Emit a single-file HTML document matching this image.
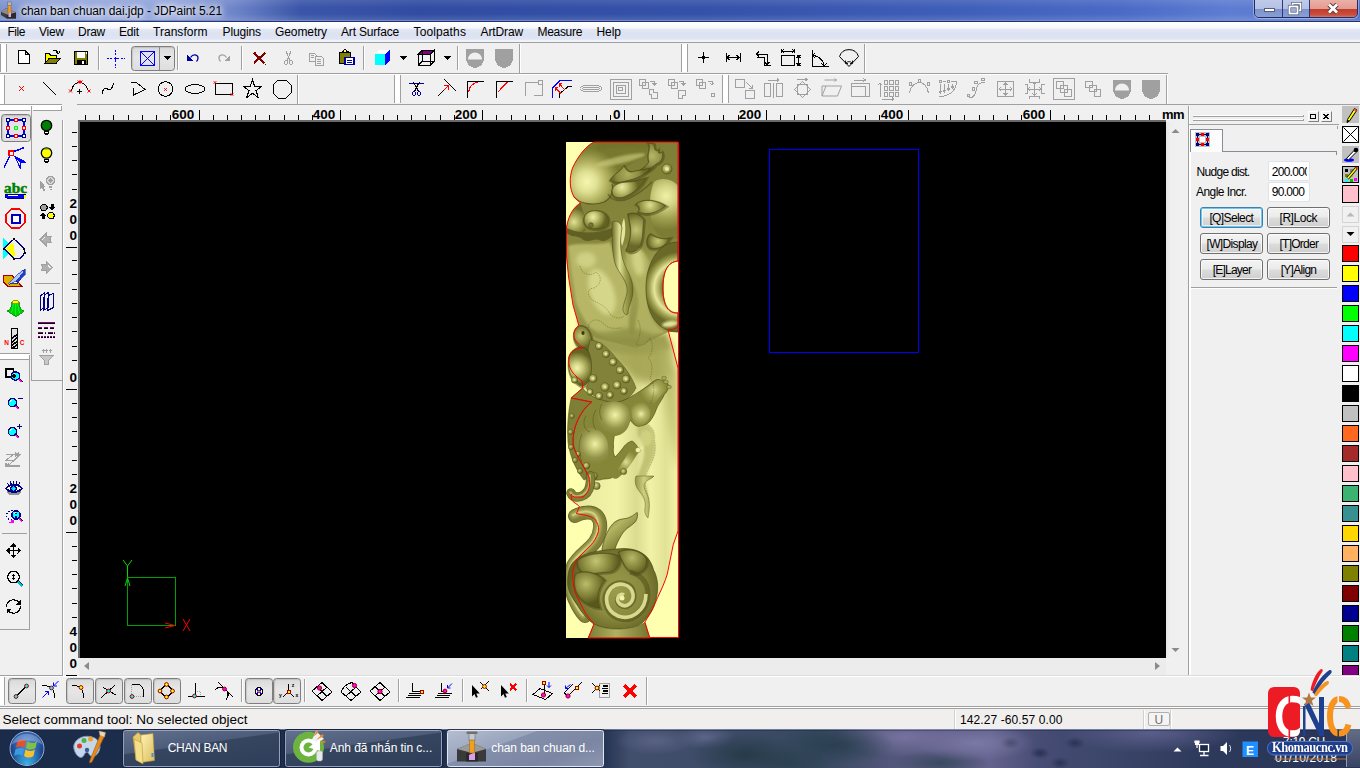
<!DOCTYPE html>
<html><head><meta charset="utf-8"><title>JDPaint</title>
<style>
html,body{margin:0;padding:0;}
body{width:1360px;height:768px;overflow:hidden;position:relative;background:#f0f0f0;font-family:"Liberation Sans",sans-serif;}
div,span,svg{position:absolute;box-sizing:border-box;}
span{white-space:nowrap;}
svg{overflow:visible;}
</style></head><body>
<div style="left:0px;top:0px;width:1360px;height:22px;background:linear-gradient(90deg,#7d92cf 0px,#93a6dc 60px,#8fa2da 180px,#6d84c8 235px,#3b56a9 300px,#314ca2 420px,#3552a9 700px,#3f5eb8 950px,#4a6ac6 1120px,#5e7dd2 1230px,#5a79cf 1300px,#4e6ec6 1360px);"></div>
<div style="left:0px;top:0px;width:1360px;height:22px;background:linear-gradient(180deg,rgba(255,255,255,.10) 0,rgba(255,255,255,0) 8px,rgba(0,0,0,0) 14px,rgba(255,255,255,.12) 20px);"></div>
<div style="left:0px;top:20px;width:1360px;height:1px;background:#6f88d0;"></div>
<div style="left:0px;top:21px;width:1360px;height:1px;background:#22336f;"></div>
<span style="left:21px;top:5px;font-size:12px;line-height:12px;letter-spacing:-0.067px;color:#000;text-shadow:0 0 5px #fff,0 0 8px #fff,0 0 10px rgba(255,255,255,.8);">chan ban chuan dai.jdp - JDPaint 5.21</span>
<div style="left:1254px;top:-3px;width:104px;height:21px;border:1px solid #1f2d63;border-radius:0 0 5px 5px;overflow:hidden;box-shadow:0 0 0 1px rgba(255,255,255,.35);"><div style="left:0;top:0;width:28px;height:20px;background:linear-gradient(180deg,#c3cdea 0,#b3c0e4 55%,#7d92cb 56%,#8ba0d6 100%);border-right:1px solid #2a3a78;"></div><div style="left:28px;top:0;width:27px;height:20px;background:linear-gradient(180deg,#c3cdea 0,#b3c0e4 55%,#7d92cb 56%,#8ba0d6 100%);border-right:1px solid #2a3a78;"></div><div style="left:55px;top:0;width:48px;height:20px;background:linear-gradient(180deg,#eeb4ab 0,#e39b90 55%,#c53b2b 56%,#c8503f 85%,#d98a78 100%);"></div></div>
<svg style="left:1254px;top:0px;" width="104" height="18" viewBox="0 0 104 18"><rect x="10.5" y="8.5" width="10" height="3" fill="#fff" stroke="#555e7a" stroke-width="1"/><rect x="38.5" y="3.5" width="8" height="7" fill="none" stroke="#555e7a" stroke-width="3"/><rect x="38.5" y="3.5" width="8" height="7" fill="none" stroke="#fff" stroke-width="1.6"/><rect x="35.5" y="6.5" width="8" height="7" fill="#9fb0dc" stroke="#555e7a" stroke-width="3.2"/><rect x="35.5" y="6.5" width="8" height="7" fill="none" stroke="#fff" stroke-width="1.8"/><path d="M75 4.5 L83 12.5 M83 4.5 L75 12.5" stroke="#5a3a3a" stroke-width="4.6" fill="none"/><path d="M75 4.5 L83 12.5 M83 4.5 L75 12.5" stroke="#fff" stroke-width="2.8" fill="none"/></svg>
<svg style="left:0px;top:1px;" width="18" height="19" viewBox="0 0 18 19"><path d="M1 11 L6 7 L16 11.5 L16 17.5 L6.5 17.5 L1 14 Z" fill="#3c3c3c"/><path d="M1 11 L6 7 L16 11.5 L10 14.5 Z" fill="#8c8c8c"/><path d="M6.5 14.5 L10 13 L16 11.5 V17.5 H6.5 Z" fill="#2a2a2a"/><rect x="8" y="3.5" width="3" height="9" fill="#f0a020" stroke="#805010" stroke-width=".4"/><rect x="7.5" y="1" width="4" height="3.5" fill="#b8b8b8" stroke="#505050" stroke-width=".4"/><path d="M8.5 12.5 L11 11.5 V16 H8.5 Z" fill="#e0a8f0"/></svg>
<div style="left:0px;top:22px;width:1360px;height:21px;background:linear-gradient(180deg,#ffffff 0,#f6f8fc 6px,#e3e7f4 7.5px,#dde2f1 12px,#e0e5f3 17px,#eef1f8 18.5px,#f4f6fb 20px);"></div>
<div style="left:0px;top:42px;width:1360px;height:1px;background:#a0a0a0;"></div>
<span style="left:7.5px;top:26px;font-size:12px;line-height:12px;letter-spacing:-0.459px;color:#000;">File</span>
<span style="left:39px;top:26px;font-size:12px;line-height:12px;letter-spacing:-0.198px;color:#000;">View</span>
<span style="left:78px;top:26px;font-size:12px;line-height:12px;letter-spacing:-0.251px;color:#000;">Draw</span>
<span style="left:119px;top:26px;font-size:12px;line-height:12px;letter-spacing:-0.169px;color:#000;">Edit</span>
<span style="left:153px;top:26px;font-size:12px;line-height:12px;letter-spacing:0.030px;color:#000;">Transform</span>
<span style="left:222.5px;top:26px;font-size:12px;line-height:12px;letter-spacing:-0.123px;color:#000;">Plugins</span>
<span style="left:275px;top:26px;font-size:12px;line-height:12px;letter-spacing:-0.085px;color:#000;">Geometry</span>
<span style="left:341px;top:26px;font-size:12px;line-height:12px;letter-spacing:-0.184px;color:#000;">Art Surface</span>
<span style="left:413.5px;top:26px;font-size:12px;line-height:12px;letter-spacing:0.126px;color:#000;">Toolpaths</span>
<span style="left:480.5px;top:26px;font-size:12px;line-height:12px;letter-spacing:-0.119px;color:#000;">ArtDraw</span>
<span style="left:537.5px;top:26px;font-size:12px;line-height:12px;letter-spacing:-0.313px;color:#000;">Measure</span>
<span style="left:596.5px;top:26px;font-size:12px;line-height:12px;letter-spacing:-0.045px;color:#000;">Help</span>
<div style="left:0px;top:43px;width:1360px;height:62px;background:#f0f0f0;"></div>
<div style="left:0px;top:73px;width:1168px;height:1px;background:#a0a0a0;"></div>
<div style="left:0px;top:74px;width:1168px;height:1px;background:#fff;"></div>
<div style="left:0px;top:104px;width:62px;height:1px;background:#a0a0a0;"></div>
<div style="left:77px;top:104px;width:1283px;height:1px;background:#a0a0a0;"></div>
<div style="left:0px;top:44px;width:1px;height:28px;background:#a0a0a0;"></div>
<div style="left:1px;top:44px;width:5px;height:28px;background:#fff;"></div>
<div style="left:6px;top:44px;width:1px;height:28px;background:#a0a0a0;"></div>
<div style="left:0px;top:75px;width:4px;height:29px;background:#fff;"></div>
<div style="left:4px;top:75px;width:1px;height:29px;background:#a0a0a0;"></div>
<div style="left:394px;top:75px;width:1px;height:28px;background:#a0a0a0;"></div>
<div style="left:395px;top:75px;width:5px;height:28px;background:#fff;"></div>
<div style="left:400px;top:75px;width:1px;height:28px;background:#a0a0a0;"></div>
<div style="left:722px;top:75px;width:1px;height:28px;background:#a0a0a0;"></div>
<div style="left:723px;top:75px;width:5px;height:28px;background:#fff;"></div>
<div style="left:728px;top:75px;width:1px;height:28px;background:#a0a0a0;"></div>
<div style="left:681px;top:44px;width:1px;height:28px;background:#a0a0a0;"></div>
<div style="left:682px;top:44px;width:5px;height:28px;background:#fff;"></div>
<div style="left:687px;top:44px;width:1px;height:28px;background:#a0a0a0;"></div>
<div style="left:98px;top:46px;width:1px;height:24px;background:#a0a0a0;"></div>
<div style="left:99px;top:46px;width:1px;height:24px;background:#fff;"></div>
<div style="left:177px;top:46px;width:1px;height:24px;background:#a0a0a0;"></div>
<div style="left:178px;top:46px;width:1px;height:24px;background:#fff;"></div>
<div style="left:241px;top:46px;width:1px;height:24px;background:#a0a0a0;"></div>
<div style="left:242px;top:46px;width:1px;height:24px;background:#fff;"></div>
<div style="left:363px;top:46px;width:1px;height:24px;background:#a0a0a0;"></div>
<div style="left:364px;top:46px;width:1px;height:24px;background:#fff;"></div>
<div style="left:457px;top:46px;width:1px;height:24px;background:#a0a0a0;"></div>
<div style="left:458px;top:46px;width:1px;height:24px;background:#fff;"></div>
<div style="left:519px;top:44px;width:1px;height:29px;background:#a0a0a0;"></div>
<div style="left:520px;top:44px;width:1px;height:29px;background:#fff;"></div>
<div style="left:864px;top:44px;width:1px;height:29px;background:#a0a0a0;"></div>
<div style="left:865px;top:44px;width:1px;height:29px;background:#fff;"></div>
<div style="left:297px;top:75px;width:1px;height:29px;background:#a0a0a0;"></div>
<div style="left:298px;top:75px;width:1px;height:29px;background:#fff;"></div>
<div style="left:1166px;top:75px;width:1px;height:29px;background:#a0a0a0;"></div>
<div style="left:1167px;top:75px;width:1px;height:29px;background:#fff;"></div>
<div style="left:131px;top:45.5px;width:44px;height:25.5px;border:1px solid #7e7e7e;border-radius:3.5px;background:linear-gradient(180deg,#dadada 0,#e6e6e6 45%,#dedede 100%);box-shadow:inset 1px 1px 1px rgba(0,0,0,.12);"></div>
<div style="left:159px;top:46.5px;width:1px;height:23.5px;background:#8a8a8a;"></div>
<svg style="left:0px;top:0px;" width="1360" height="110" viewBox="0 0 1360 110"><g shape-rendering="crispEdges"><g transform="translate(23.5 58)"><path d="M-5.5 -7.5 H1.5 L5.5 -3.5 V5.5 H-5.5 Z" stroke="#000" stroke-width="1" fill="#fff" /><path d="M1.5 -7.5 V-3.5 H5.5" stroke="#000" stroke-width="1" fill="none" /></g><g transform="translate(52.5 58)"><path d="M-7.5 -2.5 V5.5 H3.5 V-2.5 H-1.5 L-3.5 -4.5 H-6.5 Z" stroke="#000" stroke-width="1" fill="#ffff00" /><path d="M-7.5 5.5 L-3.5 0.5 H7.5 L3.5 5.5 Z" stroke="#000" stroke-width="1" fill="#808000" /><path d="M0 -6.5 C2 -8.5 5 -8 5.5 -4.5 M3.5 -6 L5.5 -4 L7.5 -6.5" stroke="#000" stroke-width="1" fill="none" /></g><g transform="translate(81 58)"><rect x="-6.5" y="-7" width="13" height="13" stroke="#000" fill="#808000" stroke-width="1"/><rect x="-4" y="-6.5" width="8" height="6" fill="#fff"/><rect x="-4" y="1.5" width="9" height="4.5" fill="#000"/><rect x="1" y="3" width="2" height="3" fill="#fff"/><rect x="4.5" y="-6" width="1" height="1.5" fill="#fff"/></g><g transform="translate(115.5 58.5)"><path d="M-9 0 H9" stroke="#0000ff" stroke-width="1" fill="none" stroke-dasharray="2 1.5"/><path d="M0 -9 V9" stroke="#0000ff" stroke-width="1" fill="none" stroke-dasharray="2 1.5"/><rect x="-2" y="-0.5" width="4" height="1" fill="#0000ff"/><rect x="-0.5" y="-2" width="1" height="4" fill="#0000ff"/></g><g transform="translate(147.5 58.5)"><rect x="-7" y="-7" width="14" height="14" stroke="#0000ff" fill="none" stroke-width="1.4"/><path d="M-7 -7 L7 7 M7 -7 L-7 7" stroke="#0000ff" stroke-width="1.1" fill="none" /></g><g transform="translate(167.5 58)"><path d="M-3.5 -2 H3.5 L0 2 Z" fill="#000"/></g><g transform="translate(193 58)"><path d="M-2.5 -0.5 C0 -4.5 5 -3.5 5 0 C5 1.5 4.5 2.5 3.5 3.5" stroke="#0000a0" stroke-width="1.3" fill="none" shape-rendering="geometricPrecision"/><path d="M-6 -3 L-6 3 L0 3 Z" fill="#0000a0"/></g><g transform="translate(224 58)"><path d="M2.5 -0.5 C0 -4.5 -5 -3.5 -5 0 C-5 1.5 -4.5 2.5 -3.5 3.5" stroke="#a0a0a0" stroke-width="1.3" fill="none" shape-rendering="geometricPrecision"/><path d="M6 -3 L6 3 L0 3 Z" fill="#a0a0a0"/></g><g transform="translate(259.5 58)"><path d="M-5.5 -5.5 L5 5.5 M-5.5 5 L6 -5.5" stroke="#800000" stroke-width="2.2" fill="none" /><rect x="5.5" y="6" width="1" height="1" fill="#800000"/></g><g transform="translate(288.5 58)"><path d="M-2.5 -7 L1.5 3 M2.5 -7 L-1.5 3" stroke="#a0a0a0" stroke-width="1.2" fill="none" /><circle cx="-2.5" cy="4.5" r="1.8" stroke="#a0a0a0" fill="none" stroke-width="1.1"/><circle cx="2.5" cy="4.5" r="1.8" stroke="#a0a0a0" fill="none" stroke-width="1.1"/></g><g transform="translate(316.5 58.5)"><path d="M-7.5 -5.5 H-2.5 L-0.5 -3.5 V2.5 H-7.5 Z" stroke="#a0a0a0" stroke-width="1" fill="#f0f0f0" /><path d="M-1.5 -2.5 H4.5 L7 0 V6.5 H-1.5 Z" stroke="#a0a0a0" stroke-width="1" fill="#f0f0f0" /><path d="M-5.5 -3 H-3 M-5.5 -1 H-2.5 M0.5 1 H4.5 M0.5 3 H4.5 M0.5 5 H4.5" stroke="#a0a0a0" stroke-width="1" fill="none" /></g><g transform="translate(346.5 58)"><rect x="-7" y="-5.5" width="11" height="11" stroke="#000" fill="#808000" stroke-width="1"/><path d="M-4.5 -5.5 V-7 H-3 L-2 -8.5 H-1 L0 -7 H1.5 V-5.5 Z" stroke="#000" stroke-width="1" fill="#ffff80" /><rect x="-1.5" y="-0.5" width="9" height="7" stroke="#0000a0" fill="#fff" stroke-width="1.2"/><path d="M0.5 2 H5 M0.5 4 H5" stroke="#0000a0" stroke-width="1" fill="none" /></g><g transform="translate(382 58)"><path d="M-7 -4 H3 V7 H-7 Z" fill="#00ffff"/><path d="M3 -4 L7.5 -8 V3 L3 7 Z" fill="#0000ff"/><path d="M-7 -4 L-2.5 -8 H7.5 L3 -4 Z" fill="#fff"/></g><g transform="translate(403.5 58)"><path d="M-3.5 -2 H3.5 L0 2 Z" fill="#000"/></g><g transform="translate(426 58)"><path d="M-4 -7.5 H8 L4 -3.5 H-8 Z" fill="#800080" stroke="#000"/><path d="M-8 -3.5 H4 V7.5 H-8 Z M4 -3.5 L8 -7.5 V3.5 L4 7.5 M-8 7.5 L-4 3.5 H8 M-4 3.5 V-7.5" stroke="#000" stroke-width="1" fill="none" /></g><g transform="translate(447.5 58)"><path d="M-3.5 -2 H3.5 L0 2 Z" fill="#000"/></g><g transform="translate(475 58)"><path d="M-9 -9.5 H9 V0 C9 5 5 10 0 10 C-5 10 -9 5 -9 0 Z" fill="#a0a0a0"/><path d="M-7 1.5 A7 7 0 0 1 7 1.5 Z" fill="#f0f0f0" shape-rendering="geometricPrecision"/></g><g transform="translate(504 58)"><path d="M-9 -9.5 H9 V0 C9 5 5 10 0 10 C-5 10 -9 5 -9 0 Z" fill="#a0a0a0"/></g><g transform="translate(703.5 57.5)"><path d="M-5.5 0 H5.5 M0 -5.5 V5.5" stroke="#000" stroke-width="1" fill="none" /><rect x="-1.5" y="-0.5" width="3" height="1" fill="#000"/><rect x="-0.5" y="-1.5" width="1" height="3" fill="#000"/><rect x="-1.5" y="-1.5" width="3" height="3" fill="#000"/></g><g transform="translate(733 57.5)"><path d="M-7 -4.5 V4.5 M7 -4.5 V4.5 M-6 0 H6 M-3.5 -2.5 L-6 0 L-3.5 2.5 M3.5 -2.5 L6 0 L3.5 2.5" stroke="#000" stroke-width="1" fill="none" /></g><g transform="translate(763.5 58.5)"><path d="M-7 -4.5 H3.5 V6 M-7 -1.5 H0.5 V6 M-4.5 -7 L-7 -4.5 L-4.5 -2 M1 3.5 L3.5 6 L6 3.5 M0 6.5 H7" stroke="#000" stroke-width="1" fill="none" /></g><g transform="translate(790 58)"><rect x="-8.5" y="-2.5" width="13" height="10" stroke="#000" fill="none" stroke-width="1.2"/><path d="M-8.5 -9 V-5 M4.5 -9 V-5 M-8 -7 H4 M-6 -9 L-8 -7 L-6 -5 M2 -9 L4 -7 L2 -5" stroke="#000" stroke-width="1" fill="none" /><path d="M6.5 -2.5 H10.5 M6.5 7.5 H10.5 M8.5 -2 V7 M6.5 0 L8.5 -2 L10.5 0 M6.5 5 L8.5 7 L10.5 5" stroke="#000" stroke-width="1" fill="none" /></g><g transform="translate(820.5 58)"><path d="M-8 -8 V8.5 H8.5 M-8 -2.5 C-2 -2.5 3 2 3.5 8 M-5.5 -5 L-8 -2.5 L-5.5 0 M1 5.5 L3.5 8 L6 5.5" stroke="#000" stroke-width="1" fill="none" /></g><g transform="translate(849 58)"><path d="M0 8.5 L-9.5 -1.5 A10 10 0 0 1 9.5 -1.5 Z" stroke="#000" stroke-width="1" fill="none" shape-rendering="geometricPrecision"/><path d="M-3 5 A4 4 0 0 1 3 5 M-3.5 2.5 V5.5 H-1 M3.5 2.5 V5.5 H1" stroke="#000" stroke-width="0.9" fill="none" shape-rendering="geometricPrecision"/></g><g transform="translate(21.5 88.5)"><path d="M-2.5 -2.5 l5 5 M2.5 -2.5 l-5 5" stroke="#ff0000" stroke-width="1" fill="none" shape-rendering="geometricPrecision"/></g><g transform="translate(49.5 88.5)"><path d="M-6.5 -6.5 L6.5 6.5" stroke="#000" stroke-width="1" fill="none" /></g><g transform="translate(79.5 87.5)"><path d="M-8 3.5 C-7 -2 -4 -5 0 -5 C4 -5 7 -2 9 3.5" stroke="#000" stroke-width="1" fill="none" /><path d="M-10.5 2 l3 3 M-7.5 2 l-3 3" stroke="#ff0000" stroke-width="1" fill="none" shape-rendering="geometricPrecision"/><path d="M8 2 l3 3 M11 2 l-3 3" stroke="#ff0000" stroke-width="1" fill="none" shape-rendering="geometricPrecision"/><path d="M-2 -7 l3 3 M1 -7 l-3 3" stroke="#ff0000" stroke-width="1" fill="none" shape-rendering="geometricPrecision"/><path d="M0 -7 l3 3 M3 -7 l-3 3" stroke="#ff0000" stroke-width="1" fill="none" shape-rendering="geometricPrecision"/><path d="M-2.5 3.5 H2.5 M0 1 V6" stroke="#000" stroke-width="1" fill="none" /></g><g transform="translate(107.5 89)"><path d="M-5.5 5.5 C-5 0 -2 -2.5 0 0 C2 2.5 5 0 6 -6" stroke="#000" stroke-width="1" fill="none" /></g><g transform="translate(137.5 89)"><path d="M-7 -6.5 H-1 L7.5 0.5 L-4 6 V-1" stroke="#000" stroke-width="1" fill="none" /></g><g transform="translate(165.5 89)"><circle cx="0" cy="0" r="7.3" stroke="#000" fill="none" stroke-width="1"/><path d="M-1.3 -0.8 l2.6 2.6 M1.3 -0.8 l-2.6 2.6" stroke="#ff0000" stroke-width="1" fill="none" shape-rendering="geometricPrecision"/></g><g transform="translate(195 89)"><ellipse cx="0" cy="0" rx="10" ry="4.3" stroke="#000" fill="none" stroke-width="1"/></g><g transform="translate(223.5 89)"><rect x="-8.5" y="-6" width="17" height="11.5" stroke="#000" fill="none" stroke-width="1"/><path d="M-9.8 -7.8 l2.6 2.6 M-7.2 -7.8 l-2.6 2.6" stroke="#ff0000" stroke-width="1" fill="none" shape-rendering="geometricPrecision"/><path d="M7.2 4.2 l2.6 2.6 M9.8 4.2 l-2.6 2.6" stroke="#ff0000" stroke-width="1" fill="none" shape-rendering="geometricPrecision"/></g><g transform="translate(252.5 89)"><path d="M0 -9 L2.2 -2.5 H9 L3.5 1.5 L5.8 8.5 L0 4.2 L-5.8 8.5 L-3.5 1.5 L-9 -2.5 H-2.2 Z" stroke="#000" stroke-width="1" fill="none" /></g><g transform="translate(282 89)"><path d="M-4 -9 H4 L9 -4 V4 L4 9 H-4 L-9 4 V-4 Z" stroke="#000" stroke-width="1" fill="none" /></g><g transform="translate(416.5 89)"><path d="M-7.5 -5.5 H7.5" stroke="#0000a0" stroke-width="1" fill="none" /><path d="M-3 -7 L2 2.5 M3 -7 L-2 2.5" stroke="#000" stroke-width="1.2" fill="none" /><circle cx="-2.5" cy="4.5" r="1.8" stroke="#0000a0" fill="none" stroke-width="1.2"/><circle cx="2.5" cy="4.5" r="1.8" stroke="#0000a0" fill="none" stroke-width="1.2"/></g><g transform="translate(447 87)"><path d="M-3 -8 L9 4" stroke="#000" stroke-width="1" fill="none" /><path d="M-9 9 L2 -2" stroke="#000" stroke-width="1" fill="none" /><path d="M2 -2 L-3 -1 M2 -2 L1 3 M2 -2 L-3 3" stroke="#ff0000" stroke-width="1" fill="none" /></g><g transform="translate(475.5 89.5)"><path d="M-8 8.5 V-8 H8.5" stroke="#000" stroke-width="1.2" fill="none" /><path d="M-7 2.5 C-6 -3 -3 -6.5 2.5 -7.5" stroke="#ff0000" stroke-width="1.2" fill="none" /></g><g transform="translate(504.5 89.5)"><path d="M-8 8.5 V-8 H8.5" stroke="#000" stroke-width="1.2" fill="none" /><path d="M-7 3 L3 -7.5" stroke="#ff0000" stroke-width="1.2" fill="none" /></g><g transform="translate(533.5 88)"><path d="M-8.5 7.5 V-6 H4.5 M8.5 -6 V7.5 H0 M4.5 -8 H8.5 V-4 H4.5 Z" stroke="#a0a0a0" stroke-width="1" fill="none" /></g><g transform="translate(562 89)"><path d="M-9.5 8.5 V-1 L-2 -8.5 H9.5" stroke="#0000ff" stroke-width="1.4" fill="none" /><path d="M-2.5 8.5 V5 L6 -2.5 H9.5" stroke="#000" stroke-width="1.2" fill="none" /><path d="M3 1 L-3 -5.5 M-3 -5.5 V-2.5 M-3 -5.5 H0 M-1 4.5 L-7 -1.5 M-7 -1.5 V1.5 M-7 -1.5 H-4" stroke="#ff0000" stroke-width="1" fill="none" /></g><g transform="translate(591 88.5)"><ellipse cx="0" cy="0" rx="11" ry="3.5" stroke="#a0a0a0" fill="none" stroke-width="1"/><ellipse cx="0" cy="0" rx="8.5" ry="1.5" stroke="#a0a0a0" fill="none" stroke-width="1"/></g><g transform="translate(620.5 89)"><rect x="-10.5" y="-10" width="21" height="20" stroke="#a0a0a0" fill="none" stroke-width="1"/><rect x="-7.5" y="-7" width="15" height="14" stroke="#a0a0a0" fill="none" stroke-width="1"/><rect x="-4.5" y="-4" width="9" height="8" stroke="#a0a0a0" fill="none" stroke-width="1"/><rect x="-2" y="-1.5" width="4" height="3" stroke="#a0a0a0" fill="none" stroke-width="1"/></g><g transform="translate(648.5 88)"><rect x="-9.5" y="-9" width="6" height="6" stroke="#a0a0a0" fill="none" stroke-width="1"/><rect x="-6.5" y="-6" width="6" height="6" stroke="#a0a0a0" fill="none" stroke-width="1"/><path d="M1.5 -7 H6 V-3 M4 -5 L6 -3 L8 -5" stroke="#a0a0a0" stroke-width="1" fill="none" /><path d="M1 1 H5 V4 H9 V10 H3 V6 H1 Z" stroke="#a0a0a0" stroke-width="1" fill="none" /></g><g transform="translate(677.5 88)"><rect x="-9.5" y="-9" width="6" height="6" stroke="#a0a0a0" fill="none" stroke-width="1"/><rect x="-6.5" y="-6" width="6" height="6" stroke="#a0a0a0" fill="none" stroke-width="1"/><path d="M1.5 -7 H6 V-3 M4 -5 L6 -3 L8 -5" stroke="#a0a0a0" stroke-width="1" fill="none" /><path d="M1 2 H8 V7 H5 V10 H1 Z" stroke="#a0a0a0" stroke-width="1" fill="none" /></g><g transform="translate(706 88)"><rect x="-9.5" y="-9" width="6" height="6" stroke="#a0a0a0" fill="none" stroke-width="1"/><rect x="-6.5" y="-6" width="6" height="6" stroke="#a0a0a0" fill="none" stroke-width="1"/><path d="M1.5 -7 H6 V-3 M4 -5 L6 -3 L8 -5" stroke="#a0a0a0" stroke-width="1" fill="none" /><rect x="5" y="5.5" width="3" height="2.5" stroke="#a0a0a0" fill="none" stroke-width="1"/></g><g transform="translate(745 89)"><rect x="-9.5" y="-9.5" width="9" height="7.5" stroke="#a0a0a0" fill="none" stroke-width="1"/><rect x="0.5" y="1.5" width="9" height="7.5" stroke="#a0a0a0" fill="none" stroke-width="1"/><path d="M1.5 -6.5 L7.5 -0.5 M7.5 -4 V-0.5 H4" stroke="#a0a0a0" stroke-width="1" fill="none" /></g><g transform="translate(773.5 89)"><rect x="-9" y="-5.5" width="5.5" height="13" stroke="#a0a0a0" fill="none" stroke-width="1"/><rect x="3" y="-5.5" width="5.5" height="13" stroke="#a0a0a0" fill="none" stroke-width="1"/><path d="M-0.5 -6.5 V8.5 M-6 -9 H5.5 M3.5 -10.5 L5.5 -9 L3.5 -7.5" stroke="#a0a0a0" stroke-width="1" fill="none" /></g><g transform="translate(802.5 89)"><rect x="-5" y="-4.5" width="10" height="10" stroke="#a0a0a0" fill="none" stroke-width="1"/><path d="M0 -7.5 L8 0.5 L0 8.5 L-8 0.5 Z M-6 -9.5 H5 M3 -11 L5 -9.5 L3 -8" stroke="#a0a0a0" stroke-width="1" fill="none" /></g><g transform="translate(831.5 89)"><path d="M-9.5 7 L-5.5 -3 H10 L6 7 Z M-9.5 7 V-3 H-5.5 M-7 -9 H5 M3 -10.5 L5 -9 L3 -7.5" stroke="#a0a0a0" stroke-width="1" fill="none" shape-rendering="geometricPrecision"/></g><g transform="translate(860.5 89)"><rect x="-9" y="-5.5" width="17.5" height="13" stroke="#a0a0a0" fill="none" stroke-width="1"/><rect x="-9" y="-2.5" width="14" height="10" stroke="#a0a0a0" fill="none" stroke-width="1"/><path d="M-7 -9 H5 M3 -10.5 L5 -9 L3 -7.5" stroke="#a0a0a0" stroke-width="1" fill="none" /></g><g transform="translate(889 89)"><rect x="-5" y="-8.5" width="3.5" height="3.5" stroke="#a0a0a0" fill="none" stroke-width="1"/><rect x="0.5" y="-8.5" width="3.5" height="3.5" stroke="#a0a0a0" fill="none" stroke-width="1"/><rect x="6" y="-8.5" width="3.5" height="3.5" stroke="#a0a0a0" fill="none" stroke-width="1"/><rect x="-5" y="-2.5" width="3.5" height="3.5" stroke="#a0a0a0" fill="none" stroke-width="1"/><rect x="0.5" y="-2.5" width="3.5" height="3.5" stroke="#a0a0a0" fill="none" stroke-width="1"/><rect x="6" y="-2.5" width="3.5" height="3.5" stroke="#a0a0a0" fill="none" stroke-width="1"/><rect x="-5" y="3.5" width="3.5" height="3.5" stroke="#a0a0a0" fill="none" stroke-width="1"/><rect x="0.5" y="3.5" width="3.5" height="3.5" stroke="#a0a0a0" fill="none" stroke-width="1"/><rect x="6" y="3.5" width="3.5" height="3.5" stroke="#a0a0a0" fill="none" stroke-width="1"/><path d="M-9 -6 V8 M-10.5 -4 L-9 -6 L-7.5 -4 M-7 10 H4.5 M3 8.5 L4.5 10 L3 11.5" stroke="#a0a0a0" stroke-width="1" fill="none" /></g><g transform="translate(919 89)"><path d="M-9.5 4 C-8 -4 -3 -6.5 0 -6.5 C4 -6.5 8 -3 9.5 4" stroke="#a0a0a0" stroke-width="1" fill="none" /><rect x="-10" y="-6.5" width="2.5" height="2.5" stroke="#a0a0a0" fill="none" stroke-width="1"/><rect x="-1" y="-9.5" width="2.5" height="2.5" stroke="#a0a0a0" fill="none" stroke-width="1"/><rect x="8" y="-6.5" width="2.5" height="2.5" stroke="#a0a0a0" fill="none" stroke-width="1"/></g><g transform="translate(948 89)"><path d="M-8.5 8 C0 7 8 3 8.5 -7.5" stroke="#a0a0a0" stroke-width="1" fill="none" /><rect x="-8.5" y="-8.5" width="2" height="2" stroke="#a0a0a0" fill="none" stroke-width="1"/><rect x="-0.5" y="-8.5" width="2" height="2" stroke="#a0a0a0" fill="none" stroke-width="1"/><path d="M-5 -7.5 H-2 M3 -7.5 H8 M-7.5 -5 V3.5 M-3.5 -5 V2.5 M0.5 -5 V1 M4.5 -5 V-1 M-9 2 L-7.5 4 L-6 2 M-5 1 L-3.5 3 L-2 1 M-1 -0.5 L0.5 1.5 L2 -0.5 M3 -2.5 L4.5 -0.5 L6 -2.5" stroke="#a0a0a0" stroke-width="1" fill="none" /></g><g transform="translate(976 89)"><path d="M-7 9 C0 9 0 2 1 -2 C2 -6 6 -6.5 9 -7" stroke="#a0a0a0" stroke-width="1" fill="none" /><rect x="-9" y="5" width="2.5" height="2.5" stroke="#a0a0a0" fill="none" stroke-width="1"/><rect x="-4" y="-1.5" width="2.5" height="2.5" stroke="#a0a0a0" fill="none" stroke-width="1"/><rect x="-1.5" y="-8" width="2.5" height="2.5" stroke="#a0a0a0" fill="none" stroke-width="1"/><rect x="5.5" y="-11" width="2.5" height="2.5" stroke="#a0a0a0" fill="none" stroke-width="1"/></g><g transform="translate(1005.5 89)"><rect x="-8" y="-7.5" width="16" height="14.5" stroke="#a0a0a0" fill="none" stroke-width="1"/><path d="M-6.5 0 H6.5 M0 -6 V6 M-4.5 -2 L-6.5 0 L-4.5 2 M4.5 -2 L6.5 0 L4.5 2 M-2 -4 L0 -6 L2 -4 M-2 4 L0 6 L2 4" stroke="#a0a0a0" stroke-width="1" fill="none" /></g><g transform="translate(1034.5 89)"><path d="M-10 -4.5 H-7 V4.5 H-10 M10 -4.5 H7 V4.5 H10 M-5 -10 V-7 H5 V-10 M-5 10 V7 H5 V10 M-6.5 0 H6.5 M0 -6.5 V6.5 M-4.5 -2 L-6.5 0 L-4.5 2 M4.5 -2 L6.5 0 L4.5 2 M-2 -4.5 L0 -6.5 L2 -4.5 M-2 4.5 L0 6.5 L2 4.5" stroke="#a0a0a0" stroke-width="1" fill="none" /></g><g transform="translate(1064 89)"><rect x="-10.5" y="-10.5" width="21" height="21" stroke="#a0a0a0" fill="none" stroke-width="1"/><rect x="-7.5" y="-7.5" width="7" height="7" stroke="#a0a0a0" fill="none" stroke-width="1"/><rect x="-3.5" y="-3.5" width="7" height="7" stroke="#a0a0a0" fill="none" stroke-width="1"/><rect x="0.5" y="0.5" width="7" height="7" stroke="#a0a0a0" fill="none" stroke-width="1"/></g><g transform="translate(1093.5 89)"><rect x="-8" y="-8" width="6.5" height="6.5" stroke="#a0a0a0" fill="none" stroke-width="1"/><rect x="-4" y="-4" width="6.5" height="6.5" stroke="#a0a0a0" fill="none" stroke-width="1"/><rect x="0.5" y="0.5" width="6.5" height="6.5" stroke="#a0a0a0" fill="none" stroke-width="1"/></g><g transform="translate(1122 89)"><path d="M-9 -9.5 H9 V0 C9 5 5 10 0 10 C-5 10 -9 5 -9 0 Z" fill="#a0a0a0"/><path d="M-7 1.5 A7 7 0 0 1 7 1.5 Z" fill="#f0f0f0" shape-rendering="geometricPrecision"/></g><g transform="translate(1151 89)"><path d="M-9 -9.5 H9 V0 C9 5 5 10 0 10 C-5 10 -9 5 -9 0 Z" fill="#a0a0a0"/></g></g></svg>
<svg style="left:0px;top:0px;" width="1360" height="130" viewBox="0 0 1360 130"><rect x="85" y="115" width="1" height="5" fill="#000"/><rect x="99" y="115" width="1" height="5" fill="#000"/><rect x="113" y="115" width="1" height="5" fill="#000"/><rect x="128" y="115" width="1" height="5" fill="#000"/><rect x="142" y="115" width="1" height="5" fill="#000"/><rect x="156" y="115" width="1" height="5" fill="#000"/><rect x="170" y="115" width="1" height="5" fill="#000"/><rect x="199" y="110" width="1" height="10" fill="#000"/><rect x="213" y="115" width="1" height="5" fill="#000"/><rect x="227" y="115" width="1" height="5" fill="#000"/><rect x="241" y="115" width="1" height="5" fill="#000"/><rect x="255" y="115" width="1" height="5" fill="#000"/><rect x="269" y="115" width="1" height="5" fill="#000"/><rect x="284" y="115" width="1" height="5" fill="#000"/><rect x="298" y="115" width="1" height="5" fill="#000"/><rect x="312" y="115" width="1" height="5" fill="#000"/><rect x="340" y="110" width="1" height="10" fill="#000"/><rect x="355" y="115" width="1" height="5" fill="#000"/><rect x="369" y="115" width="1" height="5" fill="#000"/><rect x="383" y="115" width="1" height="5" fill="#000"/><rect x="397" y="115" width="1" height="5" fill="#000"/><rect x="411" y="115" width="1" height="5" fill="#000"/><rect x="425" y="115" width="1" height="5" fill="#000"/><rect x="440" y="115" width="1" height="5" fill="#000"/><rect x="454" y="115" width="1" height="5" fill="#000"/><rect x="482" y="110" width="1" height="10" fill="#000"/><rect x="496" y="115" width="1" height="5" fill="#000"/><rect x="511" y="115" width="1" height="5" fill="#000"/><rect x="525" y="115" width="1" height="5" fill="#000"/><rect x="539" y="115" width="1" height="5" fill="#000"/><rect x="553" y="115" width="1" height="5" fill="#000"/><rect x="567" y="115" width="1" height="5" fill="#000"/><rect x="582" y="115" width="1" height="5" fill="#000"/><rect x="596" y="115" width="1" height="5" fill="#000"/><rect x="610" y="115" width="1" height="5" fill="#000"/><rect x="624" y="110" width="1" height="10" fill="#000"/><rect x="638" y="115" width="1" height="5" fill="#000"/><rect x="652" y="115" width="1" height="5" fill="#000"/><rect x="667" y="115" width="1" height="5" fill="#000"/><rect x="681" y="115" width="1" height="5" fill="#000"/><rect x="695" y="115" width="1" height="5" fill="#000"/><rect x="709" y="115" width="1" height="5" fill="#000"/><rect x="723" y="115" width="1" height="5" fill="#000"/><rect x="738" y="115" width="1" height="5" fill="#000"/><rect x="766" y="110" width="1" height="10" fill="#000"/><rect x="780" y="115" width="1" height="5" fill="#000"/><rect x="794" y="115" width="1" height="5" fill="#000"/><rect x="808" y="115" width="1" height="5" fill="#000"/><rect x="823" y="115" width="1" height="5" fill="#000"/><rect x="837" y="115" width="1" height="5" fill="#000"/><rect x="851" y="115" width="1" height="5" fill="#000"/><rect x="865" y="115" width="1" height="5" fill="#000"/><rect x="879" y="115" width="1" height="5" fill="#000"/><rect x="908" y="110" width="1" height="10" fill="#000"/><rect x="922" y="115" width="1" height="5" fill="#000"/><rect x="936" y="115" width="1" height="5" fill="#000"/><rect x="950" y="115" width="1" height="5" fill="#000"/><rect x="964" y="115" width="1" height="5" fill="#000"/><rect x="979" y="115" width="1" height="5" fill="#000"/><rect x="993" y="115" width="1" height="5" fill="#000"/><rect x="1007" y="115" width="1" height="5" fill="#000"/><rect x="1021" y="115" width="1" height="5" fill="#000"/><rect x="1050" y="110" width="1" height="10" fill="#000"/><rect x="1064" y="115" width="1" height="5" fill="#000"/><rect x="1078" y="115" width="1" height="5" fill="#000"/><rect x="1092" y="115" width="1" height="5" fill="#000"/><rect x="1106" y="115" width="1" height="5" fill="#000"/><rect x="1120" y="115" width="1" height="5" fill="#000"/><rect x="1135" y="115" width="1" height="5" fill="#000"/><rect x="1149" y="115" width="1" height="5" fill="#000"/></svg>
<span style="left:171.8px;top:108px;font-size:13.5px;line-height:13.5px;letter-spacing:-0.075px;font-weight:bold;color:#000;">600</span>
<span style="left:312.8px;top:108px;font-size:13.5px;line-height:13.5px;letter-spacing:-0.075px;font-weight:bold;color:#000;">400</span>
<span style="left:454.8px;top:108px;font-size:13.5px;line-height:13.5px;letter-spacing:-0.075px;font-weight:bold;color:#000;">200</span>
<span style="left:613.1px;top:108px;font-size:13.5px;line-height:13.5px;letter-spacing:-0.708px;font-weight:bold;color:#000;">0</span>
<span style="left:738.8px;top:108px;font-size:13.5px;line-height:13.5px;letter-spacing:-0.075px;font-weight:bold;color:#000;">200</span>
<span style="left:880.8px;top:108px;font-size:13.5px;line-height:13.5px;letter-spacing:-0.075px;font-weight:bold;color:#000;">400</span>
<span style="left:1022.8px;top:108px;font-size:13.5px;line-height:13.5px;letter-spacing:-0.075px;font-weight:bold;color:#000;">600</span>
<span style="left:1162px;top:108px;font-size:13px;line-height:13px;letter-spacing:-0.559px;font-weight:bold;color:#000;">mm</span>
<svg style="left:0px;top:0px;" width="80" height="700" viewBox="0 0 80 700"><rect x="72" y="132" width="5" height="1" fill="#000"/><rect x="72" y="146" width="5" height="1" fill="#000"/><rect x="72" y="160" width="5" height="1" fill="#000"/><rect x="72" y="174" width="5" height="1" fill="#000"/><rect x="72" y="189" width="5" height="1" fill="#000"/><rect x="66" y="247" width="11" height="1" fill="#000"/><rect x="72" y="260" width="5" height="1" fill="#000"/><rect x="72" y="274" width="5" height="1" fill="#000"/><rect x="72" y="289" width="5" height="1" fill="#000"/><rect x="72" y="303" width="5" height="1" fill="#000"/><rect x="72" y="317" width="5" height="1" fill="#000"/><rect x="72" y="331" width="5" height="1" fill="#000"/><rect x="72" y="346" width="5" height="1" fill="#000"/><rect x="72" y="360" width="5" height="1" fill="#000"/><rect x="66" y="389" width="11" height="1" fill="#000"/><rect x="72" y="403" width="5" height="1" fill="#000"/><rect x="72" y="417" width="5" height="1" fill="#000"/><rect x="72" y="431" width="5" height="1" fill="#000"/><rect x="72" y="446" width="5" height="1" fill="#000"/><rect x="72" y="460" width="5" height="1" fill="#000"/><rect x="72" y="474" width="5" height="1" fill="#000"/><rect x="66" y="532" width="11" height="1" fill="#000"/><rect x="72" y="546" width="5" height="1" fill="#000"/><rect x="72" y="560" width="5" height="1" fill="#000"/><rect x="72" y="574" width="5" height="1" fill="#000"/><rect x="72" y="588" width="5" height="1" fill="#000"/><rect x="72" y="603" width="5" height="1" fill="#000"/><rect x="72" y="617" width="5" height="1" fill="#000"/><rect x="66" y="675" width="11" height="1" fill="#000"/></svg>
<span style="left:69.6px;top:229px;font-size:13.5px;line-height:13.5px;letter-spacing:-0.708px;font-weight:bold;color:#000;">0</span>
<span style="left:69.6px;top:213px;font-size:13.5px;line-height:13.5px;letter-spacing:-0.708px;font-weight:bold;color:#000;">0</span>
<span style="left:69.6px;top:197px;font-size:13.5px;line-height:13.5px;letter-spacing:-0.708px;font-weight:bold;color:#000;">2</span>
<span style="left:69.6px;top:371px;font-size:13.5px;line-height:13.5px;letter-spacing:-0.708px;font-weight:bold;color:#000;">0</span>
<span style="left:69.6px;top:514px;font-size:13.5px;line-height:13.5px;letter-spacing:-0.708px;font-weight:bold;color:#000;">0</span>
<span style="left:69.6px;top:498px;font-size:13.5px;line-height:13.5px;letter-spacing:-0.708px;font-weight:bold;color:#000;">0</span>
<span style="left:69.6px;top:482px;font-size:13.5px;line-height:13.5px;letter-spacing:-0.708px;font-weight:bold;color:#000;">2</span>
<span style="left:69.6px;top:657px;font-size:13.5px;line-height:13.5px;letter-spacing:-0.708px;font-weight:bold;color:#000;">0</span>
<span style="left:69.6px;top:641px;font-size:13.5px;line-height:13.5px;letter-spacing:-0.708px;font-weight:bold;color:#000;">0</span>
<span style="left:69.6px;top:625px;font-size:13.5px;line-height:13.5px;letter-spacing:-0.708px;font-weight:bold;color:#000;">4</span>
<div style="left:62px;top:120px;width:1px;height:556px;background:#a0a0a0;"></div>
<div style="left:63px;top:120px;width:1px;height:556px;background:#fff;"></div>
<div style="left:78px;top:120px;width:1088px;height:538px;background:#000;border-left:2px solid #696969;border-top:2px solid #696969;"></div>
<div style="left:769px;top:149px;width:150px;height:204px;border:1px solid #0000ff;"></div>
<svg style="left:110px;top:555px;" width="100" height="90" viewBox="0 0 100 90"><rect x="17.5" y="22.5" width="48" height="48" fill="none" stroke="#00a000" stroke-width="1"/><path d="M13 5 L17.5 11 L22 5 M17.5 11 V22 M15 31 L17.5 23 L20 31" stroke="#00e000" stroke-width="1" fill="none"/><path d="M55 68 L65 70.5 L55 73" stroke="#ff0000" stroke-width="1" fill="none"/><path d="M73 64 L80 76 M80 64 L73 76" stroke="#ff0000" stroke-width="1" fill="none"/></svg>
<svg style="left:566px;top:142px;" width="113" height="496" viewBox="0 0 113 496"><defs><filter id="b05"><feGaussianBlur stdDeviation="0.6"/></filter><filter id="b1" x="-20%" y="-20%" width="140%" height="140%"><feGaussianBlur stdDeviation="1.1"/></filter><filter id="b2" x="-30%" y="-30%" width="160%" height="160%"><feGaussianBlur stdDeviation="2.2"/></filter><filter id="b3" x="-30%" y="-30%" width="160%" height="160%"><feGaussianBlur stdDeviation="4"/></filter><clipPath id="rc"><rect x="0" y="0" width="113" height="496"/></clipPath><linearGradient id="lg1" gradientUnits="userSpaceOnUse" x1="0" y1="0" x2="113" y2="0"><stop offset="0" stop-color="#e6e69a"/><stop offset="0.45" stop-color="#f4f4a8"/><stop offset="0.62" stop-color="#dcdc90"/><stop offset="0.75" stop-color="#f2f2a6"/><stop offset="0.88" stop-color="#e2e296"/><stop offset="1" stop-color="#f6f6aa"/></linearGradient><linearGradient id="lg2" gradientUnits="userSpaceOnUse" x1="0" y1="0" x2="0" y2="200"><stop offset="0" stop-color="#7e7e36"/><stop offset="0.5" stop-color="#86863c"/><stop offset="0.62" stop-color="#a0a050"/><stop offset="1" stop-color="#94944a"/></linearGradient><radialGradient id="rg3" gradientUnits="userSpaceOnUse" cx="21" cy="40" r="34"><stop offset="0" stop-color="#f6f6b0"/><stop offset="0.3" stop-color="#e0e094"/><stop offset="0.6" stop-color="#b0b05e"/><stop offset="0.85" stop-color="#8a8a3e"/><stop offset="1" stop-color="#78782f"/></radialGradient><radialGradient id="rg4" gradientUnits="userSpaceOnUse" cx="86" cy="14" r="14"><stop offset="0" stop-color="#b8b868"/><stop offset="0.6" stop-color="#94944a"/><stop offset="1" stop-color="#707028"/></radialGradient><radialGradient id="rg5" gradientUnits="userSpaceOnUse" cx="62" cy="32" r="16"><stop offset="0" stop-color="#aeae5c"/><stop offset="0.7" stop-color="#8c8c42"/><stop offset="1" stop-color="#6c6c28"/></radialGradient><radialGradient id="rg6" gradientUnits="userSpaceOnUse" cx="100" cy="26" r="6"><stop offset="0" stop-color="#d8d88c"/><stop offset="0.6" stop-color="#a0a050"/><stop offset="1" stop-color="#6c6c28"/></radialGradient><radialGradient id="rg7" gradientUnits="userSpaceOnUse" cx="100" cy="54" r="34"><stop offset="0" stop-color="#f0f0a8"/><stop offset="0.3" stop-color="#d4d486"/><stop offset="0.65" stop-color="#a2a252"/><stop offset="1" stop-color="#7c7c34"/></radialGradient><radialGradient id="rg8" gradientUnits="userSpaceOnUse" cx="56" cy="45" r="16"><stop offset="0" stop-color="#ececa2"/><stop offset="0.35" stop-color="#c4c474"/><stop offset="0.75" stop-color="#8a8a40"/><stop offset="1" stop-color="#666624"/></radialGradient><radialGradient id="rg9" gradientUnits="userSpaceOnUse" cx="84" cy="63" r="14"><stop offset="0" stop-color="#dede92"/><stop offset="0.5" stop-color="#a8a858"/><stop offset="1" stop-color="#72722c"/></radialGradient><radialGradient id="rg10" gradientUnits="userSpaceOnUse" cx="27" cy="75" r="13"><stop offset="0" stop-color="#eeeea6"/><stop offset="0.3" stop-color="#cccc7c"/><stop offset="0.75" stop-color="#8c8c42"/><stop offset="1" stop-color="#626220"/></radialGradient><radialGradient id="rg11" gradientUnits="userSpaceOnUse" cx="8" cy="80" r="14"><stop offset="0" stop-color="#e2e298"/><stop offset="0.35" stop-color="#b8b868"/><stop offset="0.8" stop-color="#84843a"/><stop offset="1" stop-color="#68682a"/></radialGradient><radialGradient id="rg12" gradientUnits="userSpaceOnUse" cx="70" cy="88" r="16"><stop offset="0" stop-color="#c4c474"/><stop offset="0.6" stop-color="#94944a"/><stop offset="1" stop-color="#6a6a28"/></radialGradient><radialGradient id="rg13" gradientUnits="userSpaceOnUse" cx="92" cy="99" r="10"><stop offset="0" stop-color="#c8c878"/><stop offset="0.6" stop-color="#98984a"/><stop offset="1" stop-color="#6a6a28"/></radialGradient><linearGradient id="lg14" gradientUnits="userSpaceOnUse" x1="46" y1="0" x2="68" y2="0"><stop offset="0" stop-color="#6c6c2a"/><stop offset="0.35" stop-color="#e0e094"/><stop offset="0.6" stop-color="#a4a454"/><stop offset="1" stop-color="#686826"/></linearGradient><radialGradient id="rg15" gradientUnits="userSpaceOnUse" cx="114" cy="146" r="36"><stop offset="0" stop-color="#6a6a28"/><stop offset="0.46" stop-color="#6a6a28"/><stop offset="0.56" stop-color="#a0a050"/><stop offset="0.72" stop-color="#e6e69c"/><stop offset="0.86" stop-color="#a0a050"/><stop offset="1" stop-color="#6a6a28"/></radialGradient><radialGradient id="rg16" gradientUnits="userSpaceOnUse" cx="15" cy="194" r="12"><stop offset="0" stop-color="#c8c878"/><stop offset="0.5" stop-color="#98984a"/><stop offset="1" stop-color="#666624"/></radialGradient><radialGradient id="rg17" gradientUnits="userSpaceOnUse" cx="11" cy="226" r="16"><stop offset="0" stop-color="#f4f4ae"/><stop offset="0.3" stop-color="#d4d486"/><stop offset="0.7" stop-color="#94944a"/><stop offset="1" stop-color="#646422"/></radialGradient><radialGradient id="rg18" gradientUnits="userSpaceOnUse" cx="49" cy="273" r="19"><stop offset="0" stop-color="#f2f2aa"/><stop offset="0.28" stop-color="#d0d080"/><stop offset="0.7" stop-color="#94944a"/><stop offset="1" stop-color="#868638"/></radialGradient><radialGradient id="rg19" gradientUnits="userSpaceOnUse" cx="29" cy="302" r="20"><stop offset="0" stop-color="#f0f0a8"/><stop offset="0.28" stop-color="#cccc7c"/><stop offset="0.7" stop-color="#92924a"/><stop offset="1" stop-color="#868638"/></radialGradient><radialGradient id="rg20" gradientUnits="userSpaceOnUse" cx="75" cy="272" r="12"><stop offset="0" stop-color="#eeeea6"/><stop offset="0.4" stop-color="#b8b868"/><stop offset="1" stop-color="#868638"/></radialGradient><radialGradient id="rg21" gradientUnits="userSpaceOnUse" cx="88" cy="248" r="14"><stop offset="0" stop-color="#d8d88c"/><stop offset="0.5" stop-color="#a4a454"/><stop offset="1" stop-color="#868638"/></radialGradient><radialGradient id="rg22" gradientUnits="userSpaceOnUse" cx="60" cy="320" r="12"><stop offset="0" stop-color="#dede92"/><stop offset="0.5" stop-color="#a6a656"/><stop offset="1" stop-color="#868638"/></radialGradient><radialGradient id="rg23" gradientUnits="userSpaceOnUse" cx="32.2" cy="203.2" r="4.68"><stop offset="0" stop-color="#d8d88c"/><stop offset="0.5" stop-color="#a8a858"/><stop offset="1" stop-color="#626220"/></radialGradient><radialGradient id="rg24" gradientUnits="userSpaceOnUse" cx="39.2" cy="211.2" r="4.68"><stop offset="0" stop-color="#d8d88c"/><stop offset="0.5" stop-color="#a8a858"/><stop offset="1" stop-color="#626220"/></radialGradient><radialGradient id="rg25" gradientUnits="userSpaceOnUse" cx="46.2" cy="219.2" r="4.94"><stop offset="0" stop-color="#d8d88c"/><stop offset="0.5" stop-color="#a8a858"/><stop offset="1" stop-color="#626220"/></radialGradient><radialGradient id="rg26" gradientUnits="userSpaceOnUse" cx="53.2" cy="227.2" r="4.94"><stop offset="0" stop-color="#d8d88c"/><stop offset="0.5" stop-color="#a8a858"/><stop offset="1" stop-color="#626220"/></radialGradient><radialGradient id="rg27" gradientUnits="userSpaceOnUse" cx="59.2" cy="236.2" r="5.2"><stop offset="0" stop-color="#d8d88c"/><stop offset="0.5" stop-color="#a8a858"/><stop offset="1" stop-color="#626220"/></radialGradient><radialGradient id="rg28" gradientUnits="userSpaceOnUse" cx="38.2" cy="244.2" r="5.46"><stop offset="0" stop-color="#d8d88c"/><stop offset="0.5" stop-color="#a8a858"/><stop offset="1" stop-color="#626220"/></radialGradient><radialGradient id="rg29" gradientUnits="userSpaceOnUse" cx="50.2" cy="242.2" r="5.2"><stop offset="0" stop-color="#d8d88c"/><stop offset="0.5" stop-color="#a8a858"/><stop offset="1" stop-color="#626220"/></radialGradient><radialGradient id="rg30" gradientUnits="userSpaceOnUse" cx="26.2" cy="235.7" r="5.2"><stop offset="0" stop-color="#d8d88c"/><stop offset="0.5" stop-color="#a8a858"/><stop offset="1" stop-color="#626220"/></radialGradient><radialGradient id="rg31" gradientUnits="userSpaceOnUse" cx="23.2" cy="249.2" r="4.16"><stop offset="0" stop-color="#d8d88c"/><stop offset="0.5" stop-color="#a8a858"/><stop offset="1" stop-color="#626220"/></radialGradient><radialGradient id="rg32" gradientUnits="userSpaceOnUse" cx="32.2" cy="253.2" r="4.68"><stop offset="0" stop-color="#d8d88c"/><stop offset="0.5" stop-color="#a8a858"/><stop offset="1" stop-color="#626220"/></radialGradient><radialGradient id="rg33" gradientUnits="userSpaceOnUse" cx="43.2" cy="252.2" r="4.42"><stop offset="0" stop-color="#d8d88c"/><stop offset="0.5" stop-color="#a8a858"/><stop offset="1" stop-color="#626220"/></radialGradient><radialGradient id="rg34" gradientUnits="userSpaceOnUse" cx="57.2" cy="248.2" r="4.42"><stop offset="0" stop-color="#d8d88c"/><stop offset="0.5" stop-color="#a8a858"/><stop offset="1" stop-color="#626220"/></radialGradient><radialGradient id="rg35" gradientUnits="userSpaceOnUse" cx="7.8" cy="237.2" r="4.16"><stop offset="0" stop-color="#d8d88c"/><stop offset="0.5" stop-color="#a8a858"/><stop offset="1" stop-color="#626220"/></radialGradient><radialGradient id="rg36" gradientUnits="userSpaceOnUse" cx="19.7" cy="322.9" r="4.16"><stop offset="0" stop-color="#d8d88c"/><stop offset="0.5" stop-color="#a8a858"/><stop offset="1" stop-color="#626220"/></radialGradient><radialGradient id="rg37" gradientUnits="userSpaceOnUse" cx="27.2" cy="333.2" r="4.42"><stop offset="0" stop-color="#d8d88c"/><stop offset="0.5" stop-color="#a8a858"/><stop offset="1" stop-color="#626220"/></radialGradient><radialGradient id="rg38" gradientUnits="userSpaceOnUse" cx="29.8" cy="343.2" r="4.68"><stop offset="0" stop-color="#d8d88c"/><stop offset="0.5" stop-color="#a8a858"/><stop offset="1" stop-color="#626220"/></radialGradient><radialGradient id="rg39" gradientUnits="userSpaceOnUse" cx="56.9" cy="328.8" r="3.9"><stop offset="0" stop-color="#d8d88c"/><stop offset="0.5" stop-color="#a8a858"/><stop offset="1" stop-color="#626220"/></radialGradient><radialGradient id="rg40" gradientUnits="userSpaceOnUse" cx="11.2" cy="311.2" r="3.38"><stop offset="0" stop-color="#d8d88c"/><stop offset="0.5" stop-color="#a8a858"/><stop offset="1" stop-color="#626220"/></radialGradient><radialGradient id="rg41" gradientUnits="userSpaceOnUse" cx="3.9" cy="289.4" r="3.38"><stop offset="0" stop-color="#c8c878"/><stop offset="0.5" stop-color="#9a9a4a"/><stop offset="1" stop-color="#5e5e20"/></radialGradient><radialGradient id="rg42" gradientUnits="userSpaceOnUse" cx="4.4" cy="304.4" r="3.38"><stop offset="0" stop-color="#c8c878"/><stop offset="0.5" stop-color="#9a9a4a"/><stop offset="1" stop-color="#5e5e20"/></radialGradient><radialGradient id="rg43" gradientUnits="userSpaceOnUse" cx="8.4" cy="317.4" r="3.38"><stop offset="0" stop-color="#c8c878"/><stop offset="0.5" stop-color="#9a9a4a"/><stop offset="1" stop-color="#5e5e20"/></radialGradient><radialGradient id="rg44" gradientUnits="userSpaceOnUse" cx="13.4" cy="328.4" r="3.38"><stop offset="0" stop-color="#c8c878"/><stop offset="0.5" stop-color="#9a9a4a"/><stop offset="1" stop-color="#5e5e20"/></radialGradient><radialGradient id="rg45" gradientUnits="userSpaceOnUse" cx="5.4" cy="273.4" r="3.12"><stop offset="0" stop-color="#c8c878"/><stop offset="0.5" stop-color="#9a9a4a"/><stop offset="1" stop-color="#5e5e20"/></radialGradient><linearGradient id="lg46" gradientUnits="userSpaceOnUse" x1="38" y1="372" x2="66" y2="404"><stop offset="0" stop-color="#6c6c2a"/><stop offset="0.4" stop-color="#b4b464"/><stop offset="0.7" stop-color="#8c8c40"/><stop offset="1" stop-color="#666626"/></linearGradient><linearGradient id="lg47" gradientUnits="userSpaceOnUse" x1="68" y1="0" x2="88" y2="0"><stop offset="0" stop-color="#8c8c40"/><stop offset="0.5" stop-color="#d0d080"/><stop offset="1" stop-color="#98984a"/></linearGradient><radialGradient id="rg48" gradientUnits="userSpaceOnUse" cx="50" cy="448" r="48"><stop offset="0" stop-color="#9c9c4c"/><stop offset="0.55" stop-color="#8a8a40"/><stop offset="1" stop-color="#606022"/></radialGradient><radialGradient id="rg49" gradientUnits="userSpaceOnUse" cx="30" cy="419" r="22"><stop offset="0" stop-color="#c4c474"/><stop offset="0.55" stop-color="#8e8e42"/><stop offset="1" stop-color="#5e5e20"/></radialGradient><radialGradient id="rg50" gradientUnits="userSpaceOnUse" cx="66" cy="416" r="18"><stop offset="0" stop-color="#b8b868"/><stop offset="0.55" stop-color="#86863c"/><stop offset="1" stop-color="#5a5a1e"/></radialGradient><radialGradient id="rg51" gradientUnits="userSpaceOnUse" cx="20" cy="442" r="20"><stop offset="0" stop-color="#bcbc6c"/><stop offset="0.55" stop-color="#86863c"/><stop offset="1" stop-color="#58581c"/></radialGradient><linearGradient id="lg52" gradientUnits="userSpaceOnUse" x1="22" y1="0" x2="84" y2="0"><stop offset="0" stop-color="#7c7c34"/><stop offset="0.45" stop-color="#b0b060"/><stop offset="1" stop-color="#74742e"/></linearGradient></defs><rect width="113" height="496" fill="#ffffb0"/><g clip-path="url(#rc)"><path d="M28 0 C20 4 12 14 6.5 26 C3 36 3.5 47 8 55 L14.5 61 C8 65 3 72 0.5 85 L0.5 114 L2.7 136 L7 163 L12.8 183.4 C9.5 186 7.5 190 7.8 193.5 C8 198 13 203 17 206 C9 206 3.5 210 2.7 216 C2.5 222 3 228 11 235 L16.2 239 L16.7 246 L5.2 256 L25.5 260 C15 268 6 285 7 302 C9 312 15 319 23 335 C24.5 342 24 350 17 355 L8.6 355 C5.5 354 5 352.5 5.2 352 C5 356 6 359 7 359.5 C10 362 13 363.5 13.4 364.7 L10.5 371.6 L21.3 373.5 C26 375 30 377 30 379.4 C33 383 33 388 32 391 C30 396 28 400 25 402.8 L11.5 416.5 C8 422 6.6 428 6.6 432 C6.6 440 8 446 9.5 451.7 L19.3 471.2 L28 482 L22.2 496 L83.8 496 L78.9 480 C84 472 88 464 91.6 455.6 C96 446 99 440 101.3 432 L107.2 402.8 L112 389 L112 226 L102 188 C108 188 112 186 112 182 L112 171 C100 172 97 160 97 146 C97 130 101 120 112 119 L112 0 Z" fill="url(#lg1)" /><path d="M28 0 C20 4 12 14 6.5 26 C3 36 3.5 47 8 55 L14.5 61 C8 65 3 72 0.5 85 L0.5 120 L7 163 L13 184 L30 196 L70 206 L102 190 L112 190 L112 171 C100 172 97 160 97 146 C97 130 101 120 112 119 L112 0 Z" fill="url(#lg2)" /><g filter="url(#b1)"><path d="M2 104 C14 100 30 104 44 100 L52 124 C58 136 66 150 64 168 C62 178 62 188 66 196 L40 196 C24 190 16 176 10 160 Z" fill="#b6b666" /><path d="M60 104 C70 100 80 110 84 122 C80 134 80 150 82 164 C84 176 90 186 100 190 L74 200 L66 196 C70 186 70 176 72 166 C74 150 66 136 60 126 Z" fill="#b0b060" /></g><g filter="url(#b2)"><ellipse cx="36" cy="150" rx="12" ry="24" fill="#dcdc92" transform="rotate(-20 36 150)" opacity=".85"/><ellipse cx="72" cy="120" rx="6" ry="14" fill="#e0e096" transform="rotate(-10 72 120)" opacity=".7"/><ellipse cx="20" cy="118" rx="10" ry="8" fill="#dcdc90"  opacity=".7"/></g><g filter="url(#b2)"><path d="M12 176 C24 196 44 190 60 186 C74 184 84 196 100 192 L104 206 C80 222 40 214 16 200 Z" fill="#909044" opacity=".85"/></g><path d="M28 0 C20 4 12 14 6.5 26 C3 36 3.5 47 8 55 C14 62 28 64 38 60 C46 56 48 48 46 42 C50 30 66 20 84 14 L82 0 Z" fill="url(#rg3)" opacity="1" /><g filter="url(#b1)"><ellipse cx="54" cy="18" rx="26" ry="3.5" fill="#c6c676" transform="rotate(-13 54 18)" opacity=".7"/><path d="M30 1 C44 -1 70 0 82 2 L82 6 C64 4 46 5 32 8 Z" fill="#707028" opacity=".55"/></g><path d="M8 55 C14 62 28 64 38 60 C46 56 48 48 46 42" fill="none" stroke="#4c4c18" stroke-width="1.1" stroke-opacity="0.8" /><path d="M82 1 C86 6 80 12 83 20 C80 24 76 28 70 30 C78 32 86 28 90 22 C96 20 98 14 96 10 C94 12 92 12 92 8 C90 10 88 8 88 2 Z" fill="none" stroke="#4a4a16" stroke-width="3" stroke-opacity=".5" filter="url(#b05)" transform="translate(0.6 0.8)"/><path d="M82 1 C86 6 80 12 83 20 C80 24 76 28 70 30 C78 32 86 28 90 22 C96 20 98 14 96 10 C94 12 92 12 92 8 C90 10 88 8 88 2 Z" fill="url(#rg4)" opacity="1" stroke="#4c4c18" stroke-opacity=".75" stroke-width=".9"/><path d="M44 38 C48 32 54 30 58 24 C60 28 62 30 66 30 C72 28 80 28 84 26 C80 32 72 36 64 38 C56 40 50 42 44 38 Z" fill="none" stroke="#4a4a16" stroke-width="3" stroke-opacity=".5" filter="url(#b05)" transform="translate(0.6 0.8)"/><path d="M44 38 C48 32 54 30 58 24 C60 28 62 30 66 30 C72 28 80 28 84 26 C80 32 72 36 64 38 C56 40 50 42 44 38 Z" fill="url(#rg5)" opacity="1" stroke="#4c4c18" stroke-opacity=".75" stroke-width=".9"/><ellipse cx="101" cy="27" rx="5" ry="5" fill="url(#rg6)"  stroke="#4c4c18" stroke-width=".8" stroke-opacity=".7"/><ellipse cx="101" cy="27" rx="2" ry="2" fill="#e8e8a0"  /><path d="M88 40 C96 34 108 38 112 44 L112 96 C104 100 96 98 90 90 C82 78 82 54 88 40 Z" fill="url(#rg7)" opacity="1" /><path d="M46 49 C46 43 54 40 62 40 C70 40 76 37 80 36 C76 44 68 51 58 55 C51 57 46 55 46 49 Z" fill="none" stroke="#4a4a16" stroke-width="3" stroke-opacity=".5" filter="url(#b05)" transform="translate(0.6 0.8)"/><path d="M46 49 C46 43 54 40 62 40 C70 40 76 37 80 36 C76 44 68 51 58 55 C51 57 46 55 46 49 Z" fill="url(#rg8)" opacity="1" stroke="#4c4c18" stroke-opacity=".75" stroke-width=".9"/><path d="M42 52 C46 60 56 60 64 56 C72 52 80 46 86 40" fill="none" stroke="#4c4c18" stroke-width="1.4" stroke-opacity="0.6" /><path d="M70 62 C78 56 90 58 100 64 C92 70 82 74 72 70 C74 68 74 64 70 62 Z" fill="none" stroke="#4a4a16" stroke-width="3" stroke-opacity=".5" filter="url(#b05)" transform="translate(0.6 0.8)"/><path d="M70 62 C78 56 90 58 100 64 C92 70 82 74 72 70 C74 68 74 64 70 62 Z" fill="url(#rg9)" opacity="1" stroke="#4c4c18" stroke-opacity=".75" stroke-width=".9"/><path d="M18 78 C18 70 26 68 32 69 C40 70 44 76 42 82 C40 87 30 88 24 86 C20 85 18 82 18 78 Z" fill="none" stroke="#4a4a16" stroke-width="3" stroke-opacity=".5" filter="url(#b05)" transform="translate(0.6 0.8)"/><path d="M18 78 C18 70 26 68 32 69 C40 70 44 76 42 82 C40 87 30 88 24 86 C20 85 18 82 18 78 Z" fill="url(#rg10)" opacity="1" stroke="#4c4c18" stroke-opacity=".75" stroke-width=".9"/><path d="M14.5 61 C8 65 3 72 0.5 85 L0.5 92 C8 94 16 92 20 88 C16 84 15 78 18 72 C16 68 16 64 14.5 61 Z" fill="url(#rg11)" opacity="1" /><ellipse cx="25" cy="83" rx="2.2" ry="2.2" fill="#7a7a32"  stroke="#4c4c18" stroke-width=".7"/><path d="M0.5 90 C6 97 12 93 16 97 C22 102 28 96 33 98 C38 101 44 97 48 92 L46 86 C30 92 14 92 0.5 86 Z" fill="#5c5c20" filter="url(#b05)" opacity=".9"/><path d="M62 72 C68 70 74 72 78 78 C76 86 78 96 74 104 C70 110 64 112 60 108 C64 100 66 90 64 82 Z" fill="none" stroke="#4a4a16" stroke-width="3" stroke-opacity=".5" filter="url(#b05)" transform="translate(0.6 0.8)"/><path d="M62 72 C68 70 74 72 78 78 C76 86 78 96 74 104 C70 110 64 112 60 108 C64 100 66 90 64 82 Z" fill="url(#rg12)" opacity="1" stroke="#4c4c18" stroke-opacity=".75" stroke-width=".9"/><path d="M58 76 C60 84 60 94 56 104 C54 98 54 86 58 76 Z" fill="#eeeea6" opacity=".9"/><path d="M84 92 C90 96 98 98 104 96 C100 104 92 108 84 106 C80 104 80 96 84 92 Z" fill="none" stroke="#4a4a16" stroke-width="3" stroke-opacity=".5" filter="url(#b05)" transform="translate(0.6 0.8)"/><path d="M84 92 C90 96 98 98 104 96 C100 104 92 108 84 106 C80 104 80 96 84 92 Z" fill="url(#rg13)" opacity="1" stroke="#4c4c18" stroke-opacity=".75" stroke-width=".9"/><path d="M46 80 C50 78 55 80 56 86 C54 98 54 108 57 118 C60 128 67 136 67 148 C67 158 62 164 62 172 C60 174 58 172 57 168 C57 160 62 154 61 146 C60 138 54 132 50 124 C46 114 46 98 46 80 Z" fill="url(#lg14)" stroke="#4c4c18" stroke-width=".8" stroke-opacity=".7"/><path d="M112 100 C92 100 80 122 80 146 C80 172 92 190 112 190 L112 171 C101 171 97 160 97 146 C97 130 101 120 112 119 Z" fill="url(#rg15)" stroke="#4c4c18" stroke-width=".9" stroke-opacity=".8"/><ellipse cx="104" cy="182" rx="8" ry="3" fill="#f0f0a8" transform="rotate(-8 104 182)" filter="url(#b1)" opacity=".9"/><g filter="url(#b3)"><path d="M14 196 C40 214 84 214 104 196 L108 230 C90 250 70 240 60 230 C40 215 24 210 14 210 Z" fill="#a2a252" opacity=".9"/><path d="M96 200 L112 230 V330 C104 300 100 260 96 230 Z" fill="#b6b666" opacity=".8"/></g><g filter="url(#b1)"><path d="M72 284 C80 278 90 286 88 298 C92 312 84 322 80 332 C76 342 84 352 82 362 C74 352 68 342 73 330 C78 318 80 308 76 300 C72 296 70 290 72 284 Z" fill="#bcbc6c" opacity=".85"/><ellipse cx="80" cy="296" rx="6" ry="8" fill="#d6d688"  opacity=".7"/></g><path d="M72 284 C80 278 90 286 88 298 C92 312 84 322 80 332 C76 342 84 352 82 362" fill="none" stroke="#4c4c18" stroke-width="0.7" stroke-opacity="0.45" stroke-dasharray="1.5 1"/><path d="M13 184 C9 186 7 190 8 197 C10 204 18 212 24 208 C28 204 26 194 22 188 C20 185 16 183 13 184 Z" fill="none" stroke="#4a4a16" stroke-width="3" stroke-opacity=".5" filter="url(#b05)" transform="translate(0.6 0.8)"/><path d="M13 184 C9 186 7 190 8 197 C10 204 18 212 24 208 C28 204 26 194 22 188 C20 185 16 183 13 184 Z" fill="url(#rg16)" opacity="1" stroke="#4c4c18" stroke-opacity=".75" stroke-width=".9"/><ellipse cx="17" cy="191" rx="1.6" ry="2" fill="#3a3a10"  /><path d="M15 205 C7 206 2.5 212 2.5 222 C2.5 232 7 240 15 244 C22 244 26 236 26 226 C26 214 22 206 15 205 Z" fill="none" stroke="#4a4a16" stroke-width="3" stroke-opacity=".5" filter="url(#b05)" transform="translate(0.6 0.8)"/><path d="M15 205 C7 206 2.5 212 2.5 222 C2.5 232 7 240 15 244 C22 244 26 236 26 226 C26 214 22 206 15 205 Z" fill="url(#rg17)" opacity="1" stroke="#4c4c18" stroke-opacity=".75" stroke-width=".9"/><path d="M24 198 C34 198 44 208 50 216 C58 224 66 234 70 246 C64 258 54 262 44 260 C32 258 24 252 20 246 C26 238 28 220 22 208 Z" fill="#82823a" stroke="#4c4c18" stroke-width=".8" stroke-opacity=".6"/><path d="M5.2 256 L25.5 260 C15 268 6 285 7 302 C9 312 15 319 23 335.5 C26 338 32 339 37.4 337 C42 337 46 336 46 335.5 C50 332 54 326 54.3 325.4 C58 322 62 318 64.4 315 C68 314 72 312 73 309 C72 304 68 300 66 299 C62 300 58 304 57.7 305 C54 310 50 314 49.2 315 C47 312 47 308 47.5 305 C47 300 48 294 49.2 291.5 C56 290 62 284 64.4 278 C68 284 72 285 74.6 284 C80 283 84 280 84.8 278 C88 274 90 268 91.5 264.5 C94 260 97 256 98.3 252.6 C101 250 103 246 102 242 C100 239 96 238 91.5 237.4 C88 238 84 242 81.4 244 C76 248 70 252 66 254 C60 258 50 262 44 260 C32 258 20 252 16.7 246 Z" fill="#868638" stroke="#4c4c18" stroke-width=".9" stroke-opacity=".75"/><path d="M36 262 C48 256 62 260 64 272 C66 284 58 294 48 294 C38 294 32 286 32 276 C32 270 33 265 36 262 Z" fill="url(#rg18)" opacity="1" /><path d="M14 288 C24 282 40 288 42 302 C44 316 38 330 28 332 C18 330 10 318 10 306 C10 298 11 292 14 288 Z" fill="url(#rg19)" opacity="1" /><path d="M66 262 C72 256 82 258 84 268 C86 276 80 284 72 284 C66 282 64 270 66 262 Z" fill="url(#rg20)" opacity="1" /><path d="M66 254 C76 250 86 242 92 238 C98 238 102 242 100 248 C94 254 88 262 84 268 C80 260 72 256 66 254 Z" fill="url(#rg21)" opacity="1" /><path d="M46 334 C52 328 58 318 64 308 C68 306 72 308 72 311 C68 318 60 330 52 336 C48 338 46 336 46 334 Z" fill="url(#rg22)" opacity="1" /><path d="M30 268 C26 274 26 282 30 288 M16 292 C12 300 12 312 16 320 M36 262 C33 266 33 274 36 278 M20 274 C16 280 18 288 24 290" fill="none" stroke="#4c4c18" stroke-width="0.8" stroke-opacity="0.6" /><ellipse cx="33" cy="204" rx="3.6" ry="3.6" fill="url(#rg23)"  stroke="#4c4c18" stroke-width=".7" stroke-opacity=".7"/><ellipse cx="33" cy="204" rx="1.26" ry="1.26" fill="#e6e69c"  /><ellipse cx="40" cy="212" rx="3.6" ry="3.6" fill="url(#rg24)"  stroke="#4c4c18" stroke-width=".7" stroke-opacity=".7"/><ellipse cx="40" cy="212" rx="1.26" ry="1.26" fill="#e6e69c"  /><ellipse cx="47" cy="220" rx="3.8" ry="3.8" fill="url(#rg25)"  stroke="#4c4c18" stroke-width=".7" stroke-opacity=".7"/><ellipse cx="47" cy="220" rx="1.33" ry="1.33" fill="#e6e69c"  /><ellipse cx="54" cy="228" rx="3.8" ry="3.8" fill="url(#rg26)"  stroke="#4c4c18" stroke-width=".7" stroke-opacity=".7"/><ellipse cx="54" cy="228" rx="1.33" ry="1.33" fill="#e6e69c"  /><ellipse cx="60" cy="237" rx="4" ry="4" fill="url(#rg27)"  stroke="#4c4c18" stroke-width=".7" stroke-opacity=".7"/><ellipse cx="60" cy="237" rx="1.4" ry="1.4" fill="#e6e69c"  /><ellipse cx="39" cy="245" rx="4.2" ry="4.2" fill="url(#rg28)"  stroke="#4c4c18" stroke-width=".7" stroke-opacity=".7"/><ellipse cx="39" cy="245" rx="1.47" ry="1.47" fill="#e6e69c"  /><ellipse cx="51" cy="243" rx="4" ry="4" fill="url(#rg29)"  stroke="#4c4c18" stroke-width=".7" stroke-opacity=".7"/><ellipse cx="51" cy="243" rx="1.4" ry="1.4" fill="#e6e69c"  /><ellipse cx="27" cy="236.5" rx="4" ry="4" fill="url(#rg30)"  stroke="#4c4c18" stroke-width=".7" stroke-opacity=".7"/><ellipse cx="27" cy="236.5" rx="1.4" ry="1.4" fill="#e6e69c"  /><ellipse cx="24" cy="250" rx="3.2" ry="3.2" fill="url(#rg31)"  stroke="#4c4c18" stroke-width=".7" stroke-opacity=".7"/><ellipse cx="24" cy="250" rx="1.12" ry="1.12" fill="#e6e69c"  /><ellipse cx="33" cy="254" rx="3.6" ry="3.6" fill="url(#rg32)"  stroke="#4c4c18" stroke-width=".7" stroke-opacity=".7"/><ellipse cx="33" cy="254" rx="1.26" ry="1.26" fill="#e6e69c"  /><ellipse cx="44" cy="253" rx="3.4" ry="3.4" fill="url(#rg33)"  stroke="#4c4c18" stroke-width=".7" stroke-opacity=".7"/><ellipse cx="44" cy="253" rx="1.19" ry="1.19" fill="#e6e69c"  /><ellipse cx="58" cy="249" rx="3.4" ry="3.4" fill="url(#rg34)"  stroke="#4c4c18" stroke-width=".7" stroke-opacity=".7"/><ellipse cx="58" cy="249" rx="1.19" ry="1.19" fill="#e6e69c"  /><ellipse cx="8.6" cy="238" rx="3.2" ry="3.2" fill="url(#rg35)"  stroke="#4c4c18" stroke-width=".7" stroke-opacity=".7"/><ellipse cx="8.6" cy="238" rx="1.12" ry="1.12" fill="#e6e69c"  /><ellipse cx="100" cy="240" rx="2.4" ry="1.8" fill="#a8a858"  stroke="#4c4c18" stroke-width=".6" stroke-opacity=".7"/><ellipse cx="103" cy="245" rx="2.4" ry="1.8" fill="#a8a858"  stroke="#4c4c18" stroke-width=".6" stroke-opacity=".7"/><ellipse cx="98" cy="236" rx="2.4" ry="1.8" fill="#a8a858"  stroke="#4c4c18" stroke-width=".6" stroke-opacity=".7"/><ellipse cx="72" cy="308" rx="2.6" ry="2.6" fill="#f4f4ae"  stroke="#4c4c18" stroke-width=".5" stroke-opacity=".6"/><ellipse cx="75.5" cy="306" rx="2" ry="2" fill="#e8e8a0"  /><ellipse cx="20.5" cy="323.7" rx="3.2" ry="3.2" fill="url(#rg36)"  stroke="#4c4c18" stroke-width=".7" stroke-opacity=".7"/><ellipse cx="28" cy="334" rx="3.4" ry="3.4" fill="url(#rg37)"  stroke="#4c4c18" stroke-width=".7" stroke-opacity=".7"/><ellipse cx="30.6" cy="344" rx="3.6" ry="3.6" fill="url(#rg38)"  stroke="#4c4c18" stroke-width=".7" stroke-opacity=".7"/><ellipse cx="57.7" cy="329.6" rx="3" ry="3" fill="url(#rg39)"  stroke="#4c4c18" stroke-width=".7" stroke-opacity=".7"/><ellipse cx="12" cy="312" rx="2.6" ry="2.6" fill="url(#rg40)"  stroke="#4c4c18" stroke-width=".7" stroke-opacity=".7"/><path d="M5.2 256 C2 270 1 285 2 300 C4 315 10 328 18 338 L23 335.5 C15 319 9 312 7 302 C6 285 15 268 25.5 260 Z" fill="#7e7e36" stroke="#4c4c18" stroke-width=".8" stroke-opacity=".7"/><ellipse cx="4.5" cy="290" rx="2.6" ry="2.6" fill="url(#rg41)"  stroke="#4c4c18" stroke-width=".6" stroke-opacity=".7"/><ellipse cx="5" cy="305" rx="2.6" ry="2.6" fill="url(#rg42)"  stroke="#4c4c18" stroke-width=".6" stroke-opacity=".7"/><ellipse cx="9" cy="318" rx="2.6" ry="2.6" fill="url(#rg43)"  stroke="#4c4c18" stroke-width=".6" stroke-opacity=".7"/><ellipse cx="14" cy="329" rx="2.6" ry="2.6" fill="url(#rg44)"  stroke="#4c4c18" stroke-width=".6" stroke-opacity=".7"/><ellipse cx="6" cy="274" rx="2.4" ry="2.4" fill="url(#rg45)"  stroke="#4c4c18" stroke-width=".6" stroke-opacity=".7"/><g fill="none" stroke-linecap="round"><path d="M9 374 C16 370 26 369 31 374 C36 380 35 391 29 400 C23 408 12 414 7 424 C4 434 4 448 9 458 C12 465 15 470 19 474" stroke="#4e4e18" stroke-width="14" stroke-opacity=".85"/><path d="M9 374 C16 370 26 369 31 374 C36 380 35 391 29 400 C23 408 12 414 7 424 C4 434 4 448 9 458 C12 465 15 470 19 474" stroke="#808038" stroke-width="12.4"/><path d="M9 374 C16 370 26 369 31 374 C36 380 35 391 29 400 C23 408 12 414 7 424 C4 434 4 448 9 458 C12 465 15 470 19 474" stroke="#acac5c" stroke-width="6.5" filter="url(#b1)" transform="translate(-1.5 -1)"/><path d="M9 374 C16 370 26 369 31 374 C36 380 35 391 29 400 C23 408 12 414 7 424 C4 434 4 448 9 458 C12 465 15 470 19 474" stroke="#d0d080" stroke-width="2" filter="url(#b05)" transform="translate(-2 -1)"/><path d="M24.5 334 C25 342 24 349 18 353 C13 356 7 356 5 351" stroke="#4e4e18" stroke-width="9.5" stroke-opacity=".85"/><path d="M24.5 334 C25 342 24 349 18 353 C13 356 7 356 5 351" stroke="#808038" stroke-width="8"/><path d="M24.5 334 C25 342 24 349 18 353 C13 356 7 356 5 351" stroke="#b8b868" stroke-width="2" filter="url(#b05)" transform="translate(-0.6 -0.8)"/></g><path d="M36 408 C37 400 39 395 40.8 391.5 C43 386 46 382 49.2 379.7 C53 377 57 377 61 376.3 C65 375 68 373 71.2 370.4 C72 374 71 377 69.5 379.7 C67 382 64 384.5 61 386.5 C58 389 56 392 54.3 395 C52 399 50 403 49.2 406.8 L47 413 Z" fill="url(#lg46)" stroke="#4c4c18" stroke-width=".9" stroke-opacity=".8"/><path d="M70 334 C68 340 70 346 74 350 C78 354 80 360 79 366 C78 370 80 374 82 376 C83 370 84 364 83 358 C82 352 78 348 78 344 C78 340 82 338 86 336 L88 334 Z" fill="url(#lg47)" stroke="#4c4c18" stroke-width=".7" stroke-opacity=".6"/><path d="M11.5 416.5 C20 410 36 408 54.5 406.7 C64 406 72 408 77.9 412.6 C83 416 86 422 87.7 428.2 C90 432 91 437 91.6 441.9 C92 448 91 454 89.6 459.5 C88 466 85 471 81.8 475 L76 481 C70 485 62 487 54.5 486.8 C46 487 36 486 29 483 C22 478 16 471 11.5 463.4 C6 456 2 449 1.7 441.9 C1.5 436 2 430 3.7 426.3 C5 422 8 419 11.5 416.5 Z" fill="url(#rg48)" stroke="#4c4c18" stroke-width=".9" stroke-opacity=".8"/><path d="M12 418 C24 410 44 410 52.5 414 C56 420 52 428 44 430 C36 430 28 432 20 432 C14 430 10 424 12 418 Z" fill="none" stroke="#4a4a16" stroke-width="3" stroke-opacity=".5" filter="url(#b05)" transform="translate(0.6 0.8)"/><path d="M12 418 C24 410 44 410 52.5 414 C56 420 52 428 44 430 C36 430 28 432 20 432 C14 430 10 424 12 418 Z" fill="url(#rg49)" opacity="1" stroke="#4c4c18" stroke-opacity=".75" stroke-width=".9"/><path d="M52.5 410 C62 406 74 408 80 416 C82 424 78 430 70 432 C64 430 60 426 58 422 C56 418 54 414 52.5 410 Z" fill="none" stroke="#4a4a16" stroke-width="3" stroke-opacity=".5" filter="url(#b05)" transform="translate(0.6 0.8)"/><path d="M52.5 410 C62 406 74 408 80 416 C82 424 78 430 70 432 C64 430 60 426 58 422 C56 418 54 414 52.5 410 Z" fill="url(#rg50)" opacity="1" stroke="#4c4c18" stroke-opacity=".75" stroke-width=".9"/><path d="M9.5 432 C16 428 30 430 38.8 438 C32 446 30 456 34 466 C26 466 16 460 11.5 452 C8 446 8 438 9.5 432 Z" fill="none" stroke="#4a4a16" stroke-width="3" stroke-opacity=".5" filter="url(#b05)" transform="translate(0.6 0.8)"/><path d="M9.5 432 C16 428 30 430 38.8 438 C32 446 30 456 34 466 C26 466 16 460 11.5 452 C8 446 8 438 9.5 432 Z" fill="url(#rg51)" opacity="1" stroke="#4c4c18" stroke-opacity=".75" stroke-width=".9"/><g filter="url(#b05)" fill="none"><path d="M57 456 C52 452 49 459 54 463 C61 468 69 461 68 452 C67 441 53 437 44 445 C35 454 38 470 51 476 C66 482 82 470 82 452 C82 440 74 432 64 430" stroke="#4e4e18" stroke-width="5" stroke-opacity=".55"/><path d="M58 453 C53 450 49 458 54 462 C61 467 68 460 67 452 C65 442 53 439 45 446 C37 455 40 469 52 474 C66 479 80 468 80 452" stroke="#e4e49a" stroke-width="3.6" stroke-opacity=".9"/></g><ellipse cx="56" cy="456" rx="2.5" ry="2.5" fill="#f4f4ae"  filter="url(#b05)"/><path d="M28 482 C40 489 66 489 78.9 480.6 L83.8 496 L22.2 496 Z" fill="url(#lg52)" stroke="#4c4c18" stroke-width=".8" stroke-opacity=".6"/><path d="M14 124 C16 134 26 134 30 130 C36 134 36 142 28 146 C22 146 20 152 26 158 C34 162 40 164 44 172 C50 178 56 176 58 174 M22 186 C24 176 32 176 38 182 C44 188 50 186 56 186" fill="none" stroke="#4c4c18" stroke-width="0.7" stroke-opacity="0.55" stroke-dasharray="1.5 1"/><path d="M72 178 C76 186 74 196 70 202 C76 206 82 200 84 196 C88 204 86 212 82 216 C88 222 86 230 84 236 C90 244 88 254 84 262" fill="none" stroke="#4c4c18" stroke-width="0.7" stroke-opacity="0.55" stroke-dasharray="1.5 1"/></g><path d="M28 0 C20 4 12 14 6.5 26 C3 36 3.5 47 8 55 L14.5 61 C8 65 3 72 0.5 85 L0.5 114 L2.7 136 L7 163 L12.8 183.4 C9.5 186 7.5 190 7.8 193.5 C8 198 13 203 17 206 C9 206 3.5 210 2.7 216 C2.5 222 3 228 11 235 L16.2 239 L16.7 246 L5.2 256 L25.5 260 C15 268 6 285 7 302 C9 312 15 319 23 335 C24.5 342 24 350 17 355 L8.6 355 C5.5 354 5 352.5 5.2 352 C5 356 6 359 7 359.5 C10 362 13 363.5 13.4 364.7 L10.5 371.6 L21.3 373.5 C26 375 30 377 30 379.4 C33 383 33 388 32 391 C30 396 28 400 25 402.8 L11.5 416.5 C8 422 6.6 428 6.6 432 C6.6 440 8 446 9.5 451.7 L19.3 471.2 L28 482 L22.2 496 L83.8 496 L78.9 480 C84 472 88 464 91.6 455.6 C96 446 99 440 101.3 432 L107.2 402.8 L112 389 L112 226 L102 188 C108 188 112 186 112 182 L112 171 C100 172 97 160 97 146 C97 130 101 120 112 119 L112 0 Z" fill="none" stroke="#ff0000" stroke-width="1"/><path d="M112.5 0 V496" stroke="#ff0000" stroke-width="1"/><path d="M84 495.5 H113" stroke="#ff0000" stroke-width="1"/></svg>
<div style="left:1166px;top:122px;width:18px;height:536px;background:linear-gradient(90deg,#e4e4e4 0,#efefef 4px,#f0f0f0 100%);"></div>
<div style="left:79px;top:658px;width:1087px;height:17px;background:#ececec;"></div>
<svg style="left:79px;top:658px;" width="1110" height="17" viewBox="0 0 1110 17"><path d="M5 8 L10 4 V12 Z M1081 8 L1076 4 V12 Z" fill="#8a8a8a"/></svg>
<svg style="left:1167px;top:105px;" width="19" height="560" viewBox="0 0 19 560"><path d="M8.5 24 L4.5 28 H12.5 Z M8.5 547 L4.5 543 H12.5 Z" fill="#8a8a8a"/></svg>
<div style="left:0px;top:105px;width:62px;height:5px;background:#fff;"></div>
<div style="left:0px;top:110px;width:30px;height:1px;background:#a0a0a0;"></div>
<div style="left:33px;top:110px;width:29px;height:1px;background:#a0a0a0;"></div>
<div style="left:31px;top:106px;width:1px;height:275px;background:#a0a0a0;"></div>
<div style="left:61px;top:106px;width:1px;height:5px;background:#a0a0a0;"></div>
<div style="left:0px;top:353px;width:30px;height:1px;background:#a0a0a0;"></div>
<div style="left:0px;top:354px;width:30px;height:5px;background:#fff;"></div>
<div style="left:0px;top:359px;width:30px;height:1px;background:#a0a0a0;"></div>
<div style="left:29px;top:355px;width:1px;height:275px;background:#a0a0a0;"></div>
<div style="left:0px;top:629px;width:30px;height:1px;background:#a0a0a0;"></div>
<div style="left:32px;top:380px;width:31px;height:1px;background:#a0a0a0;"></div>
<div style="left:2px;top:533px;width:25px;height:1px;background:#a0a0a0;"></div>
<div style="left:35px;top:283px;width:25px;height:1px;background:#a0a0a0;"></div>
<div style="left:0.5px;top:114px;width:30px;height:28px;border:1px solid #7e7e7e;border-radius:3.5px;background:linear-gradient(180deg,#dadada 0,#e6e6e6 45%,#dedede 100%);box-shadow:inset 1px 1px 1px rgba(0,0,0,.12);"></div>
<svg style="left:0px;top:0px;" width="80" height="700" viewBox="0 0 80 700"><g shape-rendering="crispEdges"><g transform="translate(16 128)"><rect x="-8" y="-8" width="16" height="16" stroke="#0000ff" fill="none" stroke-width="2"/><rect x="-10" y="-10" width="4" height="4" fill="#000080"/><rect x="-9" y="-9" width="2" height="2" fill="#fff"/><rect x="6" y="-10" width="4" height="4" fill="#000080"/><rect x="7" y="-9" width="2" height="2" fill="#fff"/><rect x="-10" y="6" width="4" height="4" fill="#000080"/><rect x="-9" y="7" width="2" height="2" fill="#fff"/><rect x="6" y="6" width="4" height="4" fill="#000080"/><rect x="7" y="7" width="2" height="2" fill="#fff"/><rect x="-2" y="-10" width="4" height="4" fill="#ff0000"/><rect x="-1" y="-9" width="2" height="2" fill="#fff"/><rect x="-2" y="6" width="4" height="4" fill="#ff0000"/><rect x="-1" y="7" width="2" height="2" fill="#fff"/><rect x="-10" y="-2" width="4" height="4" fill="#ff0000"/><rect x="-9" y="-1" width="2" height="2" fill="#fff"/><rect x="6" y="-2" width="4" height="4" fill="#ff0000"/><rect x="7" y="-1" width="2" height="2" fill="#fff"/><rect x="-2" y="-2" width="4" height="4" fill="#00ff00"/><rect x="-1" y="-1" width="2" height="2" fill="#f0f0f0"/></g><g transform="translate(15.5 157.5)"><path d="M-1.5 -6 L9 -10 M-6 -1 L-11.5 10" stroke="#0000ff" stroke-width="1.6" fill="none" /><rect x="-7.5" y="-7.5" width="6" height="6" fill="#ff0000"/><rect x="-6" y="-6" width="3" height="3" fill="#fff"/><path d="M-0.5 -1 L10.5 5 L5 4.5 L4.5 10 Z" stroke="#0000ff" stroke-width="1.2" fill="none" /><path d="M-0.5 -1 L5 4.5" stroke="#0000ff" stroke-width="1.2" fill="none" /><path d="M3 1 L10.5 5 L5 4.5 Z" fill="#0000ff"/></g><g transform="translate(15.5 188.5)"><text x="0" y="4" text-anchor="middle" font-family="Liberation Serif" font-weight="bold" font-size="15.5" fill="#008000" stroke="#008000" stroke-width=".5" textLength="23" lengthAdjust="spacingAndGlyphs" style="shape-rendering:auto">abc</text><rect x="-10.5" y="6" width="21" height="3.5" rx="1.7" fill="#0000ff" stroke="#000080" stroke-width="1"/><rect x="-8" y="6.8" width="10" height="1" fill="#fff"/><rect x="8" y="6.5" width="2" height="2.5" fill="#ffff00"/></g><g transform="translate(15.5 218.5)"><path d="M-4 -9.5 H4 L9.5 -4 V4 L4 9.5 H-4 L-9.5 4 V-4 Z" stroke="#ff0000" stroke-width="2" fill="none" /><rect x="-4" y="-4" width="8" height="8" stroke="#0000c0" fill="#fff" stroke-width="2"/></g><g transform="translate(15.5 248.5)"><path d="M-12.5 -11.5 L-1.5 0 L-12.5 11.5 Z" fill="#00ffff"/><path d="M-11.5 0 L-1.5 -9.5 L8.5 0 C10 5 7 10 3 10 H-1.5 Z" fill="#f0f0f0"/><path d="M-9.5 0 L-3 -6 C-1 -3 -0.5 3 -1 7.5 L-2 8.5 Z" fill="#ffff00"/><path d="M-11.5 0 L-1.5 -9.5 L8.5 0 C10 5 7 10 3 10 H-1.5 Z" stroke="#000080" stroke-width="1.3" fill="none" /><rect x="-2.5" y="-10.5" width="2" height="2" fill="#000"/><rect x="-12.5" y="-1" width="2" height="2" fill="#000"/><rect x="7.5" y="-1" width="2" height="2" fill="#000"/><rect x="8.5" y="3" width="2" height="2" fill="#000"/><rect x="-2.5" y="9" width="2" height="2" fill="#000"/></g><g transform="translate(15.5 278)"><path d="M-12.5 -3 H-4 L6.5 8.5 H-7.5 L-12.5 3.5 Z" fill="#e0b000" stroke="#a00000" stroke-width="1"/><path d="M9.5 -9.5 L3 -5 L-7 6 L2 5 L10 -4 Z" fill="#2040c0"/><path d="M6 -8 L3 -5 L-7 6 L-2 5.5 L8 -6 Z" fill="#b0c8ff"/><path d="M-7 6 L2 5 L0 3 Z" fill="#fff" stroke="#000080" stroke-width=".6"/><path d="M9.5 -9.5 L3 -5 L-7 6 L2 5 L10 -4 Z" fill="none" stroke="#203090" stroke-width=".6"/></g><g transform="translate(15.5 308)"><path d="M-3.5 -6 C-3.5 -1 -5 1 -8.5 3 L0 8.5 L8.5 3 C5 1 3.5 -1 3.5 -6 Z" fill="#00d000" stroke="#008000" stroke-width=".8"/><path d="M-2 -4 L-4 5 M0 -4 L0 7 M2 -4 L4 5" stroke="#00ff40" stroke-width="0.8" fill="none" /><ellipse cx="0" cy="-6" rx="3.5" ry="1.8" fill="#ffff00" stroke="#808000" stroke-width=".8"/></g><g transform="translate(14.5 338.5)"><rect x="-3" y="-10" width="6" height="20" stroke="#000" fill="#e0e0e0" stroke-width="1"/><path d="M-2.5 0 L2.5 -4 M-2.5 3.5 L2.5 -0.5 M-2.5 7 L2.5 3 M-2.5 10 L2.5 6.5" stroke="#000" stroke-width="1.6" fill="none" /><text x="-8" y="6.5" text-anchor="middle" font-family="Liberation Sans" font-weight="bold" font-size="6.5" fill="#ff0000">N</text><text x="7.5" y="6.5" text-anchor="middle" font-family="Liberation Sans" font-weight="bold" font-size="6.5" fill="#ff0000">C</text></g><g transform="translate(15.5 375.5)"><rect x="-9.5" y="-6.5" width="7.5" height="8" stroke="#000" fill="#f0f0f0" stroke-width="1.2"/><circle cx="0" cy="0.5" r="4.2" stroke="#000080" fill="#00ffff" stroke-width="1.4"/><path d="M3.024 3.524 l3 3" stroke="#ff00ff" stroke-width="1.8" fill="none"/><path d="M3.824 3.224 l3 3" stroke="#000" stroke-width="0.9" fill="none"/><path d="M-2.3 0 a2.5 2.5 0 0 1 2 -2" stroke="#fff" stroke-width="1" fill="none"/><circle cx="-1.5" cy="0.5" r="1.2" stroke="#000" fill="#000" stroke-width="1"/></g><g transform="translate(15.5 403)"><circle cx="-3" cy="-0.5" r="4.2" stroke="#000080" fill="#00ffff" stroke-width="1.4"/><path d="M0.024 2.524 l3 3" stroke="#ff00ff" stroke-width="1.8" fill="none"/><path d="M0.824 2.224 l3 3" stroke="#000" stroke-width="0.9" fill="none"/><path d="M-5.3 -1 a2.5 2.5 0 0 1 2 -2" stroke="#fff" stroke-width="1" fill="none"/><path d="M2 -4.5 H7" stroke="#000080" stroke-width="1.2" fill="none" /></g><g transform="translate(15.5 431)"><circle cx="-3" cy="0.5" r="4.2" stroke="#000080" fill="#00ffff" stroke-width="1.4"/><path d="M0.024 3.524 l3 3" stroke="#ff00ff" stroke-width="1.8" fill="none"/><path d="M0.824 3.224 l3 3" stroke="#000" stroke-width="0.9" fill="none"/><path d="M-5.3 0 a2.5 2.5 0 0 1 2 -2" stroke="#fff" stroke-width="1" fill="none"/><path d="M1.5 -4.5 H6.5 M4 -7 V-2" stroke="#000080" stroke-width="1.2" fill="none" /></g><g transform="translate(14 460.5)"><path d="M-8 -6 H-1 L-8 0 H-1 M-1 -6 H6 L-6 5.5 H6 M-8 2 V6 H-4 M-8 6 L-5 3 M1 -8 L5 -4 M5 -8 L1 -4" stroke="#a0a0a0" stroke-width="1.2" fill="none" /></g><g transform="translate(14 488.5)"><ellipse cx="0" cy="3.5" rx="7" ry="3.5" fill="#909090"/><path d="M-8 0 C-4 -5 4 -5 8 0 C4 4.5 -4 4.5 -8 0 Z" fill="#fff" stroke="#000080" stroke-width="2"/><circle cx="-0.5" cy="0" r="2.8" fill="#00c0ff" stroke="#000080" stroke-width="1.2"/><rect x="-1" y="-0.5" width="1.5" height="1.5" fill="#00ffff"/><path d="M-7 -5.5 L-4.5 -3 M-4 -7 L-2.5 -4 M-0.5 -7.5 V-4 M3 -7 L2 -4 M6 -6 L4.5 -3.5" stroke="#000080" stroke-width="1.2" fill="none" /></g><g transform="translate(14.5 516)"><path d="M-2 -5 A4.5 4.5 0 1 0 -2 3.5" stroke="#000080" stroke-width="1.4" fill="none" stroke-dasharray="1.5 1.5"/><circle cx="1.5" cy="-1" r="4.2" stroke="#000080" fill="#00ffff" stroke-width="1.4"/><path d="M4.524 2.024 l3 3" stroke="#ff00ff" stroke-width="1.8" fill="none"/><path d="M5.324 1.724 l3 3" stroke="#000" stroke-width="0.9" fill="none"/><path d="M-0.8 -1.5 a2.5 2.5 0 0 1 2 -2" stroke="#fff" stroke-width="1" fill="none"/><path d="M1.5 -3 V-2 M1.5 -0.5 V1.5" stroke="#000080" stroke-width="1.3" fill="none" /><rect x="-4" y="3.5" width="3" height="2.5" fill="#ff00ff"/><rect x="-6" y="6" width="5" height="1.2" fill="#ff00ff"/></g><g transform="translate(13.5 550.5)"><path d="M-7 0 H7 M0 -7 V7" stroke="#000" stroke-width="1.4" fill="none" /><path d="M-7.5 0 L-4 -3 V3 Z M7.5 0 L4 -3 V3 Z M0 -7.5 L-3 -4 H3 Z M0 7.5 L-3 4 H3 Z" fill="#000"/></g><g transform="translate(15 578.5)"><circle cx="-1.5" cy="-1.5" r="5.8" stroke="#000" fill="none" stroke-width="1.3"/><path d="M-1.5 -4 V1 M-3 -2.5 L-1.5 -4 L0 -2.5 M-3 -0.5 L-1.5 1 L0 -0.5" stroke="#000" stroke-width="1" fill="none" /><path d="M3 3 L7.5 7.5" stroke="#00c0c0" stroke-width="2.2"/><path d="M3.8 2.5 L8 6.8" stroke="#000080" stroke-width=".8"/></g><g transform="translate(13.5 606.5)"><path d="M5.5 -4 A7 7 0 0 0 -7 0.5 M-5.5 4 A7 7 0 0 0 7 -0.5" stroke="#000" stroke-width="1.2" fill="none" /><path d="M7 -7 V-2 H2 Z M-7 7 V2 H-2 Z" fill="#000"/></g><g transform="translate(46.5 128)"><circle cx="0" cy="-2.5" r="5.2" fill="#008000" stroke="#000" stroke-width="1.3" shape-rendering="geometricPrecision"/><rect x="-2.5" y="3" width="5" height="1" fill="#000"/><rect x="-2.5" y="4" width="1" height="2" fill="#000"/><rect x="1.5" y="4" width="1" height="2" fill="#000"/><rect x="-1.5" y="4" width="3" height="1" fill="#fff"/><rect x="-2.5" y="5" width="5" height="1" fill="#000"/><rect x="-1.5" y="6" width="3" height="1" fill="#000"/></g><g transform="translate(46.5 155.5)"><circle cx="0" cy="-2.5" r="5.2" fill="#ffff00" stroke="#000" stroke-width="1.3" shape-rendering="geometricPrecision"/><path d="M-3.2 -6 A4.6 4.6 0 0 1 3.2 -6 Z" fill="#60a000" shape-rendering="geometricPrecision"/><rect x="-2.5" y="3" width="5" height="1" fill="#000"/><rect x="-2.5" y="4" width="1" height="2" fill="#000"/><rect x="1.5" y="4" width="1" height="2" fill="#000"/><rect x="-1.5" y="4" width="3" height="1" fill="#fff"/><rect x="-2.5" y="5" width="5" height="1" fill="#000"/><rect x="-1.5" y="6" width="3" height="1" fill="#000"/></g><g transform="translate(46.5 183.5)"><path d="M-6.5 -3 V6 L-4.5 4 L-3 7.5 L-1.5 7 L-3 3.8 H-0.5 Z" fill="#a0a0a0"/><circle cx="4" cy="-3" r="4" stroke="#a0a0a0" fill="#d8d8d8" stroke-width="1.2"/><circle cx="4" cy="-3" r="1.8" stroke="#a0a0a0" fill="#a0a0a0" stroke-width="1"/><path d="M2.5 2.5 H5.5 M2.5 4.3 H5.5 M3 6 H5" stroke="#a0a0a0" stroke-width="1" fill="none" /></g><g transform="translate(47 211.5)"><circle cx="-3" cy="-4" r="3.2" stroke="#000" fill="#a0a0a0" stroke-width="1.1"/><circle cx="4" cy="4" r="3.2" stroke="#000" fill="#ffff00" stroke-width="1.1"/><path d="M3.5 -7.5 H6.5 V-4.5 H8.5 L5 -1 L1.5 -4.5 H3.5 Z" fill="#000"/><path d="M-2.5 7.5 H-5.5 V4.5 H-7.5 L-4 1 L-0.5 4.5 H-2.5 Z" fill="#000"/></g><g transform="translate(46 239.5)"><path d="M-6 0 L0 -6 V-3 H5 L4 0 L5 3 H0 V6 Z" fill="#b0b0b0" stroke="#a0a0a0" stroke-width="1"/><path d="M-4.5 0 L-1 -3.5 V-1.5 L-3 0 Z" fill="#f0f0f0"/></g><g transform="translate(46.5 267.5)"><path d="M6 0 L0 -6 V-3 H-5 L-4 0 L-5 3 H0 V6 Z" fill="#b0b0b0" stroke="#a0a0a0" stroke-width="1"/><path d="M4.5 0 L1 -3.5 V-1.5 L3 0 Z" fill="#f0f0f0"/></g><g transform="translate(47 301.5)"><path d="M-6.5 -6 L-2.5 -8.5 V6 L-6.5 8.5 Z M-2.5 -6.5 L1.5 -9 V6 L-3 8.5 V-5 M1.5 -6 L6.5 -8 V6 L0.5 9 V-4" stroke="#000080" stroke-width="1.1" fill="none" /></g><g transform="translate(46.5 329.5)"><rect x="-8.5" y="-7.5" width="17" height="1" fill="#800080"/><rect x="-8.5" y="-6.5" width="17" height="1.2" fill="#000"/><path d="M-8.5 -2 H8.5" stroke="#800080" stroke-width="1" stroke-dasharray="4 2" fill="none"/><path d="M-8.5 -1" /><path d="M-8.5 -1 H8.5" stroke="#000" stroke-width="1" stroke-dasharray="4 2" fill="none"/><path d="M-8.5 2.5 H8.5" stroke="#800080" stroke-width="1" stroke-dasharray="5 1.5 1.5 1.5" fill="none"/><path d="M-8.5 3.5 H8.5" stroke="#000" stroke-width="1" stroke-dasharray="5 1.5 1.5 1.5" fill="none"/><path d="M-8.5 7 H8.5" stroke="#800080" stroke-width="1" stroke-dasharray="1.5 1.5" fill="none"/><path d="M-8.5 8 H8.5" stroke="#000" stroke-width="1" stroke-dasharray="1.5 1.5" fill="none"/></g><g transform="translate(46.5 357)"><path d="M-7.5 -2 H7.5 L2 3.5 V7 H-2 V3.5 Z" fill="#c8c8c8" stroke="#a0a0a0" stroke-width="1"/><path d="M-3.5 -8 V-4 M0 -8.5 V-4 M3.5 -8 V-4 M-5 -6.5 H-2 M-1.5 -7 H1.5 M2 -6.5 H5" stroke="#a0a0a0" stroke-width="1" fill="none" /></g></g></svg>
<div style="left:1188px;top:106px;width:1px;height:570px;background:#a0a0a0;"></div>
<div style="left:1189px;top:106px;width:1px;height:570px;background:#fff;"></div>
<div style="left:1193px;top:115px;width:111px;height:1px;background:#fff;"></div>
<div style="left:1193px;top:116px;width:111px;height:1px;background:#a0a0a0;"></div>
<div style="left:1303px;top:115px;width:1px;height:2px;background:#a0a0a0;"></div>
<div style="left:1193px;top:119px;width:111px;height:1px;background:#fff;"></div>
<div style="left:1193px;top:120px;width:111px;height:1px;background:#a0a0a0;"></div>
<div style="left:1303px;top:119px;width:1px;height:2px;background:#a0a0a0;"></div>
<div style="left:1308px;top:111px;width:11px;height:11px;background:#f0f0f0;border-left:1px solid #fff;border-top:1px solid #fff;border-right:1px solid #808080;border-bottom:1px solid #808080;"></div>
<div style="left:1321px;top:111px;width:11px;height:11px;background:#f0f0f0;border-left:1px solid #fff;border-top:1px solid #fff;border-right:1px solid #808080;border-bottom:1px solid #808080;"></div>
<svg style="left:1308px;top:111px;" width="30" height="12" viewBox="0 0 30 12"><g shape-rendering="crispEdges"><rect x="2.5" y="3.5" width="5" height="4" stroke="#000" fill="none" stroke-width="1"/><rect x="2" y="2.5" width="6" height="1.2" fill="#000"/><path d="M15.5 3 L20.5 8 M20.5 3 L15.5 8" stroke="#000" stroke-width="1.5" fill="none" /></g></svg>
<div style="left:1189px;top:124px;width:150px;height:1px;background:#a0a0a0;"></div>
<div style="left:1337px;top:126px;width:1px;height:3px;background:#a0a0a0;"></div>
<div style="left:1190px;top:129px;width:33px;height:23px;background:#fcfcfc;border-top:1px solid #898c95;border-left:1px solid #898c95;border-right:1px solid #898c95;"></div>
<div style="left:1222px;top:151px;width:115px;height:1px;background:#898c95;"></div>
<div style="left:1336px;top:151px;width:1px;height:4px;background:#898c95;"></div>
<div style="left:1190px;top:152px;width:1px;height:524px;background:#fff;"></div>
<svg style="left:1195px;top:132px;" width="15" height="15" viewBox="0 0 15 15"><g shape-rendering="crispEdges"><rect x="0" y="0" width="15" height="15" fill="#c0c0c0"/><rect x="2.5" y="2.5" width="10" height="10" stroke="#000080" fill="none" stroke-width="1.6"/><rect x="5" y="5" width="5" height="5" fill="#fff"/><rect x="1" y="1" width="3" height="3" fill="#000080"/><rect x="11" y="1" width="3" height="3" fill="#000080"/><rect x="1" y="11" width="3" height="3" fill="#000080"/><rect x="11" y="11" width="3" height="3" fill="#000080"/><rect x="6" y="1" width="3" height="3" fill="#ff0000"/><rect x="6" y="11" width="3" height="3" fill="#ff0000"/><rect x="1" y="6" width="3" height="3" fill="#ff0000"/><rect x="11" y="6" width="3" height="3" fill="#ff0000"/></g></svg>
<span style="left:1196.5px;top:166px;font-size:12px;line-height:12px;letter-spacing:-0.700px;color:#000;">Nudge dist.</span>
<span style="left:1196px;top:186px;font-size:12px;line-height:12px;letter-spacing:-0.564px;color:#000;">Angle Incr.</span>
<div style="left:1268px;top:161px;width:42px;height:19.5px;background:#fff;border:1px solid #dfe3ea;border-radius:2px;overflow:hidden;"><div style="left:0;top:0;width:38px;height:18px;overflow:hidden;"><span style="left:2.7px;top:4px;font-size:12px;line-height:12px;letter-spacing:-0.7px;">200.000</span></div></div>
<div style="left:1268px;top:182px;width:42px;height:19.5px;background:#fff;border:1px solid #dfe3ea;border-radius:2px;overflow:hidden;"><span style="left:2.7px;top:3px;font-size:12px;line-height:12px;letter-spacing:-0.67px;">90.000</span></div>
<div style="left:1200px;top:207px;width:63px;height:21px;border:1px solid #3c7fb1;box-shadow:inset 0 0 0 1px #6cc8ee, inset 0 0 0 2px rgba(255,255,255,.6);border-radius:3px;background:linear-gradient(180deg,#f3f3f3 0,#ebebeb 48%,#dcdcdc 52%,#cfcfcf 100%);"></div>
<span style="left:1209.4px;top:212px;font-size:12px;line-height:12px;letter-spacing:-0.606px;color:#000;">[Q]Select</span>
<div style="left:1267px;top:207px;width:63px;height:21px;border:1px solid #707070;box-shadow:inset 0 0 0 1px rgba(255,255,255,.75);border-radius:3px;background:linear-gradient(180deg,#f3f3f3 0,#ebebeb 48%,#dcdcdc 52%,#cfcfcf 100%);"></div>
<span style="left:1279.5px;top:212px;font-size:12px;line-height:12px;letter-spacing:-0.455px;color:#000;">[R]Lock</span>
<div style="left:1200px;top:233px;width:63px;height:21px;border:1px solid #707070;box-shadow:inset 0 0 0 1px rgba(255,255,255,.75);border-radius:3px;background:linear-gradient(180deg,#f3f3f3 0,#ebebeb 48%,#dcdcdc 52%,#cfcfcf 100%);"></div>
<span style="left:1206.5px;top:238px;font-size:12px;line-height:12px;letter-spacing:-0.654px;color:#000;">[W]Display</span>
<div style="left:1267px;top:233px;width:63px;height:21px;border:1px solid #707070;box-shadow:inset 0 0 0 1px rgba(255,255,255,.75);border-radius:3px;background:linear-gradient(180deg,#f3f3f3 0,#ebebeb 48%,#dcdcdc 52%,#cfcfcf 100%);"></div>
<span style="left:1279.5px;top:238px;font-size:12px;line-height:12px;letter-spacing:-0.747px;color:#000;">[T]Order</span>
<div style="left:1200px;top:259px;width:63px;height:21px;border:1px solid #707070;box-shadow:inset 0 0 0 1px rgba(255,255,255,.75);border-radius:3px;background:linear-gradient(180deg,#f3f3f3 0,#ebebeb 48%,#dcdcdc 52%,#cfcfcf 100%);"></div>
<span style="left:1212.7px;top:264px;font-size:12px;line-height:12px;letter-spacing:-0.774px;color:#000;">[E]Layer</span>
<div style="left:1267px;top:259px;width:63px;height:21px;border:1px solid #707070;box-shadow:inset 0 0 0 1px rgba(255,255,255,.75);border-radius:3px;background:linear-gradient(180deg,#f3f3f3 0,#ebebeb 48%,#dcdcdc 52%,#cfcfcf 100%);"></div>
<span style="left:1280.7px;top:264px;font-size:12px;line-height:12px;letter-spacing:-0.719px;color:#000;">[Y]Align</span>
<div style="left:1191px;top:287px;width:146px;height:1px;background:#a0a0a0;"></div>
<div style="left:1191px;top:288px;width:146px;height:1px;background:#fff;"></div>
<div style="left:1342px;top:245px;width:17px;height:17px;background:#ff0000;border:1px solid #000;"></div>
<div style="left:1342px;top:265px;width:17px;height:17px;background:#ffff00;border:1px solid #000;"></div>
<div style="left:1342px;top:285px;width:17px;height:17px;background:#0000ff;border:1px solid #000;"></div>
<div style="left:1342px;top:305px;width:17px;height:17px;background:#00ff00;border:1px solid #000;"></div>
<div style="left:1342px;top:325px;width:17px;height:17px;background:#00ffff;border:1px solid #000;"></div>
<div style="left:1342px;top:345px;width:17px;height:17px;background:#ff00ff;border:1px solid #000;"></div>
<div style="left:1342px;top:365px;width:17px;height:17px;background:#ffffff;border:1px solid #000;"></div>
<div style="left:1342px;top:385px;width:17px;height:17px;background:#000000;border:1px solid #000;"></div>
<div style="left:1342px;top:405px;width:17px;height:17px;background:#c0c0c0;border:1px solid #000;"></div>
<div style="left:1342px;top:425px;width:17px;height:17px;background:#ff6820;border:1px solid #000;"></div>
<div style="left:1342px;top:445px;width:17px;height:17px;background:#a52a2a;border:1px solid #000;"></div>
<div style="left:1342px;top:465px;width:17px;height:17px;background:#ffc0cb;border:1px solid #000;"></div>
<div style="left:1342px;top:485px;width:17px;height:17px;background:#3cb371;border:1px solid #000;"></div>
<div style="left:1342px;top:505px;width:17px;height:17px;background:#389090;border:1px solid #000;"></div>
<div style="left:1342px;top:525px;width:17px;height:17px;background:#ffd700;border:1px solid #000;"></div>
<div style="left:1342px;top:545px;width:17px;height:17px;background:#ffb060;border:1px solid #000;"></div>
<div style="left:1342px;top:565px;width:17px;height:17px;background:#808000;border:1px solid #000;"></div>
<div style="left:1342px;top:585px;width:17px;height:17px;background:#800000;border:1px solid #000;"></div>
<div style="left:1342px;top:605px;width:17px;height:17px;background:#000090;border:1px solid #000;"></div>
<div style="left:1342px;top:625px;width:17px;height:17px;background:#008000;border:1px solid #000;"></div>
<div style="left:1342px;top:645px;width:17px;height:17px;background:#008080;border:1px solid #000;"></div>
<div style="left:1342px;top:665px;width:17px;height:10px;background:#800080;border:1px solid #000;border-bottom:none;"></div>
<div style="left:1342px;top:106px;width:17px;height:17px;background:#c0c0c0;"></div>
<div style="left:1342px;top:126px;width:17px;height:17px;background:#fff;border:1px solid #000;"></div>
<div style="left:1342px;top:146px;width:17px;height:17px;background:#c0c0c0;"></div>
<div style="left:1342px;top:166px;width:17px;height:17px;background:#c0c0c0;border:1px solid #000;"></div>
<div style="left:1342px;top:185px;width:17px;height:18px;background:#ffc0cb;border:1px solid #000;"></div>
<div style="left:1342px;top:205.5px;width:17px;height:17px;background:#f0f0f0;border:1px solid #d4d4d4;"></div>
<div style="left:1342px;top:225.5px;width:17px;height:17px;background:#f0f0f0;border:1px solid #d4d4d4;"></div>
<svg style="left:1342px;top:100px;" width="18" height="150" viewBox="0 0 18 150"><g><path d="M12.5 8.5 L15 10 L7.5 21 L5 22.5 L5.5 19.5 Z" fill="#ffff00" stroke="#000" stroke-width="1"/><path d="M12.5 8.5 L15 10 L14 11.5 L11.5 10 Z" fill="#ff4040"/><path d="M5 22.5 L5.5 19.5 L7.5 21 Z" fill="#000"/><path d="M1.5 27.5 L15.5 41.5 M15.5 27.5 L1.5 41.5" stroke="#000" stroke-width="1"/><ellipse cx="7" cy="60" rx="5" ry="1.8" fill="#0000ff"/><path d="M4.5 58.5 L12 50.5 L14 52.5 L6.5 60 Z" fill="#fff" stroke="#000" stroke-width="1"/><circle cx="14" cy="50" r="2.3" fill="#000"/><g shape-rendering="crispEdges"><rect x="3" y="69" width="3" height="3" fill="#000"/><rect x="8" y="69" width="3" height="3" fill="#808080"/><rect x="3" y="74" width="3" height="3" fill="#808000"/><rect x="8" y="74" width="3" height="3" fill="#c0c000"/><rect x="3" y="79" width="3" height="3" fill="#00ffff"/><rect x="12" y="78" width="3" height="3" fill="#ff00ff"/><rect x="8" y="79" width="3" height="3" fill="#00c000"/></g><path d="M14.5 68 L5.5 78.5" stroke="#000" stroke-width="3"/><path d="M14.5 68 L5.5 78.5" stroke="#ffff00" stroke-width="1.6"/><path d="M14 67.5 l1.5 1" stroke="#ff0000" stroke-width="2"/><path d="M4.5 116.5 L8.5 112.5 L12.5 116.5 Z" fill="#b8b8b8"/><path d="M4.5 132 H12.5 L8.5 136 Z" fill="#000"/></g></svg>
<div style="left:0px;top:675px;width:62px;height:1px;background:#a0a0a0;"></div>
<div style="left:79px;top:675px;width:1281px;height:1px;background:#dcdcdc;"></div>
<div style="left:0px;top:676px;width:1360px;height:1px;background:#fff;"></div>
<div style="left:0px;top:677px;width:4px;height:28px;background:#fff;"></div>
<div style="left:4px;top:677px;width:1px;height:28px;background:#a0a0a0;"></div>
<div style="left:0px;top:706px;width:1360px;height:1px;background:#a0a0a0;"></div>
<div style="left:0px;top:707px;width:1360px;height:1px;background:#fff;"></div>
<div style="left:0px;top:708px;width:1360px;height:1px;background:#a0a0a0;"></div>
<div style="left:0px;top:709px;width:1360px;height:20px;background:#f1efee;"></div>
<div style="left:954px;top:710px;width:1px;height:19px;background:#d0d0d0;"></div>
<div style="left:955px;top:710px;width:1px;height:19px;background:#fff;"></div>
<div style="left:1143px;top:710px;width:1px;height:19px;background:#d0d0d0;"></div>
<div style="left:1144px;top:710px;width:1px;height:19px;background:#fff;"></div>
<div style="left:1170px;top:710px;width:1px;height:19px;background:#d0d0d0;"></div>
<div style="left:1171px;top:710px;width:1px;height:19px;background:#fff;"></div>
<span style="left:2.5px;top:713px;font-size:13.5px;line-height:13.5px;letter-spacing:0.010px;color:#000;">Select command tool: No selected object</span>
<span style="left:960px;top:714px;font-size:12px;line-height:12px;letter-spacing:0.097px;color:#000;">142.27 -60.57 0.00</span>
<div style="left:1148px;top:711.5px;width:22px;height:14px;border:1px solid #b0b0b0;border-radius:2px;background:#f4f4f4;"></div>
<span style="left:1154.5px;top:714px;font-size:12px;line-height:12px;letter-spacing:-0.166px;color:#707070;">U</span>
<div style="left:7.5px;top:678px;width:28px;height:25.5px;border:1px solid #7e7e7e;border-radius:3.5px;background:linear-gradient(180deg,#dadada 0,#e6e6e6 45%,#dedede 100%);box-shadow:inset 1px 1px 1px rgba(0,0,0,.12);"></div>
<div style="left:65.5px;top:678px;width:28px;height:25.5px;border:1px solid #7e7e7e;border-radius:3.5px;background:linear-gradient(180deg,#dadada 0,#e6e6e6 45%,#dedede 100%);box-shadow:inset 1px 1px 1px rgba(0,0,0,.12);"></div>
<div style="left:94.5px;top:678px;width:28px;height:25.5px;border:1px solid #7e7e7e;border-radius:3.5px;background:linear-gradient(180deg,#dadada 0,#e6e6e6 45%,#dedede 100%);box-shadow:inset 1px 1px 1px rgba(0,0,0,.12);"></div>
<div style="left:123.5px;top:678px;width:28px;height:25.5px;border:1px solid #7e7e7e;border-radius:3.5px;background:linear-gradient(180deg,#dadada 0,#e6e6e6 45%,#dedede 100%);box-shadow:inset 1px 1px 1px rgba(0,0,0,.12);"></div>
<div style="left:152.5px;top:678px;width:28px;height:25.5px;border:1px solid #7e7e7e;border-radius:3.5px;background:linear-gradient(180deg,#dadada 0,#e6e6e6 45%,#dedede 100%);box-shadow:inset 1px 1px 1px rgba(0,0,0,.12);"></div>
<div style="left:245px;top:678px;width:28px;height:25.5px;border:1px solid #7e7e7e;border-radius:3.5px;background:linear-gradient(180deg,#dadada 0,#e6e6e6 45%,#dedede 100%);box-shadow:inset 1px 1px 1px rgba(0,0,0,.12);"></div>
<div style="left:273px;top:678px;width:28px;height:25.5px;border:1px solid #7e7e7e;border-radius:3.5px;background:linear-gradient(180deg,#dadada 0,#e6e6e6 45%,#dedede 100%);box-shadow:inset 1px 1px 1px rgba(0,0,0,.12);"></div>
<div style="left:241px;top:679px;width:1px;height:23px;background:#a0a0a0;"></div>
<div style="left:242px;top:679px;width:1px;height:23px;background:#fff;"></div>
<div style="left:304px;top:679px;width:1px;height:23px;background:#a0a0a0;"></div>
<div style="left:305px;top:679px;width:1px;height:23px;background:#fff;"></div>
<div style="left:398px;top:679px;width:1px;height:23px;background:#a0a0a0;"></div>
<div style="left:399px;top:679px;width:1px;height:23px;background:#fff;"></div>
<div style="left:462px;top:679px;width:1px;height:23px;background:#a0a0a0;"></div>
<div style="left:463px;top:679px;width:1px;height:23px;background:#fff;"></div>
<div style="left:526px;top:679px;width:1px;height:23px;background:#a0a0a0;"></div>
<div style="left:527px;top:679px;width:1px;height:23px;background:#fff;"></div>
<div style="left:646px;top:677px;width:1px;height:28px;background:#a0a0a0;"></div>
<div style="left:647px;top:677px;width:1px;height:28px;background:#fff;"></div>
<svg style="left:0px;top:0px;" width="700" height="768" viewBox="0 0 700 768"><g shape-rendering="crispEdges"><g transform="translate(21.5 691)"><path d="M-5 5 L5 -5" stroke="#000" stroke-width="1" fill="none" /><circle cx="-5.5" cy="5.5" r="1.89" fill="#00ffff" stroke="#a00000" stroke-width="1" shape-rendering="geometricPrecision"/><circle cx="5" cy="-5" r="1.89" fill="#00ffff" stroke="#a00000" stroke-width="1" shape-rendering="geometricPrecision"/></g><g transform="translate(50 691)"><path d="M-8 -5.5 C-3 -5.5 1 -4 2.5 -2 C4 0 4.5 3 4.5 7" stroke="#000" stroke-width="1" fill="none" /><circle cx="1.5" cy="-3" r="1.89" fill="#00ffff" stroke="#a00000" stroke-width="1" shape-rendering="geometricPrecision"/><path d="M8.5 -10 L3.5 -5 M3.5 -8.5 V-5 H7" stroke="#0000ff" stroke-width="1" fill="none" shape-rendering="geometricPrecision"/><path d="M-7.5 6.5 L-1.5 0.5 M-5 0.5 H-1.5 V4" stroke="#0000ff" stroke-width="1" fill="none" shape-rendering="geometricPrecision"/></g><g transform="translate(79 691)"><path d="M-7 -5.5 C-2 -5.5 2 -4 3 -1 C4 1 4.5 3.5 4.5 6.5" stroke="#000" stroke-width="1" fill="none" /><circle cx="2" cy="-3.5" r="1.89" fill="#ffff00" stroke="#a00000" stroke-width="1" shape-rendering="geometricPrecision"/></g><g transform="translate(108.5 691)"><path d="M-7 6.5 L7 -6.5" stroke="#000" stroke-width="1" fill="none" /><path d="M-5 -3.5 L8 4.5" stroke="#000" stroke-width="1" fill="none" /><circle cx="0" cy="0" r="1.89" fill="#00ffff" stroke="#a00000" stroke-width="1" shape-rendering="geometricPrecision"/></g><g transform="translate(137.5 691)"><path d="M-6 -7 H-1 C4 -7 6 -3 6 1 V5.5" stroke="#000" stroke-width="1" fill="none" /><path d="M-6 -6 V4" stroke="#a0a0a0" stroke-width="1" fill="none" stroke-dasharray="1 1"/><path d="M-4 5.5 H5" stroke="#a0a0a0" stroke-width="1" fill="none" stroke-dasharray="1 1"/><circle cx="-5.5" cy="5.5" r="1.89" fill="#00ffff" stroke="#a00000" stroke-width="1" shape-rendering="geometricPrecision"/></g><g transform="translate(166.5 691)"><path d="M0 -7 L7 0 L0 7 L-7 0 Z" stroke="#000" stroke-width="1" fill="none" /><circle cx="0" cy="-6.5" r="1.89" fill="#ffff00" stroke="#a00000" stroke-width="1" shape-rendering="geometricPrecision"/><circle cx="0" cy="6" r="1.89" fill="#ffff00" stroke="#a00000" stroke-width="1" shape-rendering="geometricPrecision"/><circle cx="-6.5" cy="0" r="1.89" fill="#ffff00" stroke="#a00000" stroke-width="1" shape-rendering="geometricPrecision"/><circle cx="6" cy="0" r="1.89" fill="#ffff00" stroke="#a00000" stroke-width="1" shape-rendering="geometricPrecision"/></g><g transform="translate(195 692)"><path d="M0 -9 L0 4" stroke="#000" stroke-width="1" fill="none" /><path d="M-7.5 4 L10 4" stroke="#000" stroke-width="1" fill="none" /><path d="M2 -1 H5 M5 0 V3" stroke="#a0a0a0" stroke-width="1" fill="none" stroke-dasharray="1 1"/><circle cx="-0.5" cy="4" r="1.89" fill="#00ffff" stroke="#a00000" stroke-width="1" shape-rendering="geometricPrecision"/></g><g transform="translate(224 691)"><path d="M-6 -9 L9 6" stroke="#000" stroke-width="1" fill="none" /><path d="M-9 -1.5 C-4 -5 1 -3.5 3 0 C5 3.5 4 6.5 2 8.5" stroke="#000" stroke-width="1.2" fill="none" /><circle cx="0.5" cy="-2" r="1.89" fill="#ff00ff" stroke="#a00000" stroke-width="1" shape-rendering="geometricPrecision"/></g><g transform="translate(259 691.5)"><circle cx="0" cy="0" r="3.8" stroke="#000" fill="#fff" stroke-width="1.3"/><path d="M-2.5 -2.5 L2.5 2.5 M2.5 -2.5 L-2.5 2.5" stroke="#0000ff" stroke-width="1.3" fill="none" /><circle cx="0" cy="0" r="1.26" fill="#00ffff" stroke="#ff0000" stroke-width="1" shape-rendering="geometricPrecision"/></g><g transform="translate(288.5 691.5)"><path d="M0 -8 V0 L-6 6 M0 0 L6 6" stroke="#000" stroke-width="1" fill="none" /><rect x="-1.5" y="-1.5" width="3" height="3" stroke="#a00000" fill="#ffff00" stroke-width="1"/><text x="4.5" y="-4.5" text-anchor="middle" font-family="Liberation Sans" font-weight="bold" font-size="5" fill="#000">z</text><text x="-8" y="5.5" text-anchor="middle" font-family="Liberation Sans" font-weight="bold" font-size="5" fill="#000">y</text><text x="8.5" y="5.5" text-anchor="middle" font-family="Liberation Sans" font-weight="bold" font-size="5" fill="#000">x</text></g><g transform="translate(322 691)"><path d="M-10 0 L0 -8.5 L10 1 L0 9.5 Z M-5 -4.5 L5 5.5 M5 -4 L-5 5" stroke="#000" stroke-width="1" fill="none" /><circle cx="-2.5" cy="-3" r="2.1" fill="#ff00ff" stroke="#a00000" stroke-width="1" shape-rendering="geometricPrecision"/></g><g transform="translate(351 691)"><path d="M-10 1 C-8 -4 -3 -7.5 1 -8.5 L10 1 L0 9.5 Z M-5 -4 L5 5.5 M5 -4 L-5 5" stroke="#000" stroke-width="1" fill="none" /><circle cx="3.5" cy="-5.5" r="2.1" fill="#ff00ff" stroke="#a00000" stroke-width="1" shape-rendering="geometricPrecision"/></g><g transform="translate(380 691)"><path d="M-10 0 L0 -8.5 L10 1 L0 9.5 Z M-5 -4.5 L5 5.5 M5 -4 L-5 5" stroke="#000" stroke-width="1" fill="none" /><circle cx="0" cy="0.5" r="2.1" fill="#ff00ff" stroke="#a00000" stroke-width="1" shape-rendering="geometricPrecision"/></g><g transform="translate(416 691)"><path d="M-4 -8.5 V0 H4 M-7 2.5 H7 M-8.5 4.5 H5 M-10 6.5 H3.5" stroke="#000" stroke-width="1" fill="none" /><rect x="4.5" y="-1" width="3" height="3" stroke="#a00000" fill="#ffff00" stroke-width="1"/></g><g transform="translate(445 691)"><path d="M-4 -8.5 V0 H2 M-7 2.5 H7 M-8.5 4.5 H5 M-10 6.5 H3.5" stroke="#000" stroke-width="1" fill="none" /><circle cx="0" cy="0" r="1.89" fill="#ff00ff" stroke="#a00000" stroke-width="1" shape-rendering="geometricPrecision"/><path d="M7 -7.5 L2.5 -3 M2.5 -6 V-3 H5.5" stroke="#0000ff" stroke-width="1" fill="none" shape-rendering="geometricPrecision"/></g><g transform="translate(480 691)"><path d="M-8 -6 V5.5 L-5.5 3 L-4 6.8 L-2.2 6 L-3.7 2.5 H-0.2 Z" fill="#000" shape-rendering="geometricPrecision"/><path d="M0 -9 L9 0 M8.5 -9.5 L1 -2" stroke="#000" stroke-width="1" fill="none" /><circle cx="4.5" cy="-4.5" r="1.89" fill="#ffff00" stroke="#a00000" stroke-width="1" shape-rendering="geometricPrecision"/></g><g transform="translate(509 691)"><path d="M-8 -6 V5.5 L-5.5 3 L-4 6.8 L-2.2 6 L-3.7 2.5 H-0.2 Z" fill="#000" shape-rendering="geometricPrecision"/><path d="M1 -7 L7.5 -1 M7.5 -7 L1 -1" stroke="#ff0000" stroke-width="2.2" fill="none" /></g><g transform="translate(543 691)"><path d="M-10 3.5 L-3 -2.5 L9.5 2.5 L2.5 8.5 Z" stroke="#000" stroke-width="1" fill="none" /><path d="M1 -8 L1 3" stroke="#000" stroke-width="1" fill="none" /><rect x="-0.5" y="-10" width="3" height="3" stroke="#a00000" fill="#ffff00" stroke-width="1"/><circle cx="0.5" cy="4" r="2.1" fill="#ff00ff" stroke="#a00000" stroke-width="1" shape-rendering="geometricPrecision"/><path d="M6 -9 V-3.5 M4 -5.5 L6 -3.5 L8 -5.5" stroke="#0000ff" stroke-width="1" fill="none" shape-rendering="geometricPrecision"/></g><g transform="translate(572 691)"><path d="M-7 1 L1 -7 M-8 1.5 L-4 5.5 M-4 5 L9.5 -8.5" stroke="#000" stroke-width="1" fill="none" /><rect x="3" y="-5" width="3" height="3" stroke="#a00000" fill="#ffff00" stroke-width="1"/><circle cx="-4" cy="5" r="2.1" fill="#ff00ff" stroke="#a00000" stroke-width="1" shape-rendering="geometricPrecision"/><path d="M-1.5 -6.5 L-6.5 -2.5 M-6.5 -5.5 V-2.5 H-3.5" stroke="#0000ff" stroke-width="1" fill="none" shape-rendering="geometricPrecision"/></g><g transform="translate(601 691)"><rect x="-1.5" y="-7.5" width="10" height="13.5" stroke="#a0a0a0" fill="#f0f0f0" stroke-width="1"/><path d="M2 -5 H7 M1 -2.5 H7 M2 0 H7 M1 2.5 H7" stroke="#000" stroke-width="1.2" fill="none" /><path d="M-9 -8 L-1 0 M-9 2 L-1 -6" stroke="#000" stroke-width="1" fill="none" /><circle cx="-4" cy="-3" r="1.89" fill="#ffff00" stroke="#a00000" stroke-width="1" shape-rendering="geometricPrecision"/></g><g transform="translate(630 691)"><path d="M-7 -4.5 L-4.5 -7 L0 -2.5 L4.5 -7 L7 -4.5 L2.5 0 L7 4.5 L4.5 7 L0 2.5 L-4.5 7 L-7 4.5 L-2.5 0 Z" fill="#ff0000"/></g></g></svg>
<div style="left:0px;top:729px;width:1360px;height:39px;background:radial-gradient(ellipse 55px 22px at 745px 26px,#263a48 0,rgba(38,58,72,0) 100%),radial-gradient(ellipse 60px 20px at 835px 16px,#2a4050 0,rgba(42,64,80,0) 100%),radial-gradient(ellipse 40px 16px at 790px 34px,#2c4250 0,rgba(44,66,80,0) 100%),radial-gradient(ellipse 40px 14px at 655px 12px,#5a6284 0,rgba(90,98,132,0) 100%),radial-gradient(ellipse 30px 12px at 705px 8px,#5c6488 0,rgba(92,100,136,0) 100%),radial-gradient(ellipse 70px 20px at 905px 8px,#76729e 0,rgba(118,114,158,0) 100%),radial-gradient(ellipse 60px 18px at 975px 14px,#7a78a4 0,rgba(122,120,164,0) 100%),radial-gradient(ellipse 50px 14px at 940px 34px,#3a4a60 0,rgba(58,74,96,0) 100%),radial-gradient(ellipse 10px 6px at 1010px 14px,#2a3050 0,rgba(42,48,80,0) 100%),radial-gradient(ellipse 10px 6px at 1040px 24px,#2a3050 0,rgba(42,48,80,0) 100%),radial-gradient(ellipse 10px 6px at 1075px 14px,#2c3254 0,rgba(44,50,84,0) 100%),radial-gradient(ellipse 10px 6px at 1060px 34px,#2c3254 0,rgba(44,50,84,0) 100%),radial-gradient(ellipse 90px 20px at 1150px 4px,#5a5e8a 0,rgba(90,94,138,0) 100%),linear-gradient(90deg,#1b2b4a 0,#20304e 600px,#414e6c 630px,#3e4c68 720px,#36485e 820px,#56587e 900px,#64628e 990px,#464c74 1040px,#3a4468 1120px,#2e3a5c 1200px,#283456 1360px);"></div>
<div style="left:0px;top:729px;width:1360px;height:1px;background:rgba(150,165,200,.55);"></div>
<div style="left:0px;top:730px;width:1360px;height:1px;background:rgba(20,30,60,.35);"></div>
<svg style="left:0px;top:729px;" width="120" height="39" viewBox="0 0 120 39"><defs><radialGradient id="orb" cx="50%" cy="35%" r="65%"><stop offset="0" stop-color="#5b8fd0"/><stop offset=".55" stop-color="#2a5aa8"/><stop offset="1" stop-color="#0f2a60"/></radialGradient><radialGradient id="orbg" cx="50%" cy="100%" r="60%"><stop offset="0" stop-color="#40c8ff" stop-opacity=".9"/><stop offset="1" stop-color="#40c8ff" stop-opacity="0"/></radialGradient><linearGradient id="fold" x1="0" y1="0" x2="1" y2="1"><stop offset="0" stop-color="#fdf3b8"/><stop offset="1" stop-color="#d9b84e"/></linearGradient></defs><circle cx="27" cy="19.5" r="18" fill="#0a1838" opacity=".6"/><circle cx="27" cy="19.5" r="17" fill="url(#orb)" stroke="#9fb4d8" stroke-width="1"/><circle cx="27" cy="19.5" r="16.5" fill="url(#orbg)"/><path d="M17.5 12.5 C20.5 10.5 23.5 10.5 26 12 L24.5 18.5 C22 17 19 17 16 19 Z" fill="#e8502a"/><path d="M27.5 12.5 C30.5 14.5 33.5 14.5 37 12.5 L35.5 19 C32.5 21 29.5 21 26 19 Z" fill="#7fc241"/><path d="M15.5 20.5 C18.5 18.5 21.5 18.5 24 20 L22.5 26.5 C20 25 17 25 14 27 Z" fill="#3a9be0"/><path d="M25.5 20.5 C28.5 22.5 31.5 22.5 35 20.5 L33.5 27 C30.5 29 27.5 29 24 27 Z" fill="#f8c030"/><path d="M11 16 A17 17 0 0 1 43 16 C35 10 19 10 11 16 Z" fill="#fff" opacity=".25"/><path d="M74 20 C72 12 82 5 92 8 C100 10 102 18 98 24 C95 29 90 28 89 25 C88 22 85 23 84 26 C82 31 76 28 74 20 Z" fill="#c5d7ea" stroke="#7a94b4" stroke-width="1"/><circle cx="79.5" cy="17" r="2.5" fill="#e03a2a"/><circle cx="84" cy="11.5" r="2.5" fill="#58b040"/><circle cx="90.5" cy="10" r="2.5" fill="#f0a020"/><circle cx="87" cy="21" r="2.2" fill="#3a5a9a"/><path d="M101 4 L104.5 7 L92 33 L89.5 34 L90 31 Z" fill="#e88a20" stroke="#a05a10" stroke-width=".6"/><path d="M99 2 L105.5 3.5 L104.5 8 L100 6.5 Z" fill="#f0d8b0" stroke="#b09060" stroke-width=".5"/></svg>
<div style="left:122.5px;top:730px;width:157px;height:36.5px;background:linear-gradient(172deg,#62718d 0,#4c5c7a 40%,#36465f 42%,#2e3e5b 100%);border:1px solid #95a1ba;box-shadow:0 0 0 1px #16223f;border-radius:2.5px;"></div>
<div style="left:284.5px;top:730px;width:157px;height:36.5px;background:linear-gradient(172deg,#62718d 0,#4c5c7a 40%,#36465f 42%,#2e3e5b 100%);border:1px solid #95a1ba;box-shadow:0 0 0 1px #16223f;border-radius:2.5px;"></div>
<div style="left:446.5px;top:730px;width:157px;height:36.5px;background:linear-gradient(160deg,#b4bdd0 0,#98a3bc 35%,#8490ab 36%,#7a86a2 70%,#8c96b0 100%);border:1px solid #e0e6f2;box-shadow:0 0 0 1px #2a3550;border-radius:2.5px;"></div>
<span style="left:167.7px;top:742px;font-size:12px;line-height:12px;letter-spacing:-0.314px;color:#fff;">CHAN BAN</span>
<span style="left:329.7px;top:742px;font-size:12px;line-height:12px;letter-spacing:-0.045px;color:#fff;">Anh đã nhắn tin c...</span>
<span style="left:491.3px;top:742px;font-size:12px;line-height:12px;letter-spacing:-0.101px;color:#fff;">chan ban chuan d...</span>
<svg style="left:120px;top:729px;" width="500" height="39" viewBox="0 0 500 39"><path d="M13 8 L18 3.5 L21 6 L21 33.5 L16 31 Z" fill="#e8cc6a" stroke="#b89838" stroke-width=".6"/><path d="M21 6 L33 4.5 L34.5 31.5 L21 33.5 Z" fill="url(#fold2)" stroke="#b89838" stroke-width=".6"/><defs><linearGradient id="fold2" x1="0" y1="0" x2="1" y2="1"><stop offset="0" stop-color="#fdf3b8"/><stop offset="1" stop-color="#dcbc58"/></linearGradient></defs><path d="M14 10 L22 14 L23 35 L16 31 Z" fill="#f4e08c" stroke="#b89838" stroke-width=".6"/><rect x="31.5" y="24" width="2" height="4" fill="#4a90e0"/><circle cx="188.5" cy="18.2" r="15.5" fill="#6cb33f"/><path d="M188.5 18.2 L196 2 L204 10 Z" fill="#f0f0f0"/><path d="M193 8 L197 1.5 L199 3 Z M196 11 L202.5 5 L204 7 Z M198 14.5 L205 11.5 L205.5 13.5 Z" fill="#f58220"/><circle cx="188.5" cy="18.5" r="9" fill="#fff"/><circle cx="188.5" cy="18.5" r="5" fill="#6cb33f"/><path d="M188.5 18.5 L200 10 L200 22 Z" fill="#fff"/><rect x="196.5" y="22" width="6" height="10" rx="2" fill="#e8e8e8" stroke="#b0b0b0" stroke-width=".5"/><path d="M337 20 L352 14 L366 20 L366 32.5 L337 32.5 Z" fill="#3a3a3a"/><path d="M337 20 L352 14 L366 20 L352 24 Z" fill="#9a9a9a"/><path d="M346 24 H358 V32.5 H346 Z" fill="#2a2a2a"/><path d="M349 26 L355 23 V31 H349 Z" fill="#d8a0e8"/><rect x="349.5" y="9" width="5" height="15" fill="#f0a020" stroke="#a06010" stroke-width=".5"/><rect x="349" y="4" width="6" height="7" fill="#c8c8c8" stroke="#606060" stroke-width=".5"/><rect x="346.5" y="2.5" width="11" height="2.5" rx="1" fill="#707070"/></svg>
<svg style="left:1170px;top:729px;" width="190" height="39" viewBox="0 0 190 39"><path d="M3.5 22.5 L7.5 18.5 L11.5 22.5 Z" fill="#fff"/><rect x="29.5" y="15.5" width="9" height="7" fill="#1a2a4a" stroke="#fff" stroke-width="1.3"/><path d="M34 22.5 V26 M30 26.5 H38.5" stroke="#fff" stroke-width="1.3"/><path d="M27 12 V19 M25 14 V12 H29 V14" stroke="#fff" stroke-width="1.2" fill="none"/><rect x="25" y="12" width="4" height="4" fill="#fff"/><path d="M50.5 17 H53 L57 13 V26 L53 22 H50.5 Z" fill="#fff"/><path d="M59.5 16 C61 18 61 21 59.5 23" stroke="#e0e0e0" stroke-width="1" fill="none"/><rect x="72.5" y="12.5" width="15.5" height="15.5" fill="#1e90ff"/></svg>
<span style="left:1246px;top:745px;font-size:12px;line-height:12px;letter-spacing:-0.004px;font-weight:bold;color:#fff;">E</span>
<span style="left:1283px;top:736px;font-size:12px;line-height:12px;letter-spacing:-0.289px;color:#fff;">7:19 CH</span>
<span style="left:1275px;top:752px;font-size:12px;line-height:12px;letter-spacing:0.194px;color:#fff;">01/10/2018</span>
<div style="left:1346px;top:730px;width:14px;height:37px;background:linear-gradient(180deg,rgba(255,255,255,.28),rgba(255,255,255,.08));border-left:1px solid rgba(255,255,255,.45);"></div>
<svg style="left:1260px;top:660px;" width="100" height="108" viewBox="0 0 100 108"><rect x="8" y="27" width="32" height="50" rx="6" fill="#ed1c24"/><clipPath id="redc"><rect x="8" y="27" width="32" height="50" rx="6"/></clipPath><g clip-path="url(#redc)"><path d="M44 45 C42 40 37 39 32 39 C24.5 39 19 46 19 56.3 C19 67 24.5 73.6 32 73.6 C37 73.6 42 72 44 67" fill="none" stroke="#fff" stroke-width="6.5"/></g><rect x="28.5" y="34" width="1.6" height="9" fill="#ed1c24"/><rect x="28.5" y="69" width="1.6" height="9" fill="#ed1c24"/><rect x="36" y="27" width="4.2" height="50" fill="none"/><path d="M43 46 H45.5 V76 H43 Z" fill="#1f3f8f"/><path d="M44 44 L49 42 L64 74 L59.5 76 Z" fill="#1f3f8f"/><path d="M59 37 H64 V76 H59 Z" fill="#1f3f8f"/><path d="M49 32.5 L50.8 37.5 L56 37.6 L51.9 40.8 L53.4 45.9 L49 42.9 L44.6 45.9 L46.1 40.8 L42 37.6 L47.2 37.5 Z" fill="#b07840"/><path d="M88.5 48 C87 41.5 83.5 39 79.5 39 C73.5 39 70 46 70 56.3 C70 67 73.5 73.6 79.5 73.6 C83.5 73.6 87 71 88.5 64.5" fill="none" stroke="#f7931e" stroke-width="6"/><rect x="77.5" y="35" width="1.5" height="8" fill="#f0f0f0"/><rect x="77.5" y="69.5" width="1.5" height="8" fill="#2b3858"/><path d="M50.5 30 C52.5 20 56.5 12.5 61 9 C62.5 8.5 63 10 62.5 11.5 C59 16.5 55.5 23.5 53 31.5 Z" fill="#ed1c24"/><path d="M52.5 32.5 C56.5 22 63 14.5 69.5 10 C71.5 9.5 72.5 11.5 71 13.5 C65.5 18.5 59.5 25.5 55 34.5 Z" fill="#1f3f8f"/><path d="M54 35 C57.5 28 62 23.5 67 21 C69 20.5 69.5 22.5 68.5 24 C64 27.5 60 31.5 56.5 36.5 Z" fill="#f7931e"/><rect x="7.5" y="81.5" width="85" height="13.5" rx="6.5" fill="#1f3f8f" stroke="#5574bd" stroke-width="1"/><path d="M14 99 H86" stroke="#b07840" stroke-width="1.2"/></svg>
<span style="left:1272px;top:742px;font-size:12.5px;line-height:12.5px;letter-spacing:-0.451px;font-weight:bold;color:#fff;font-family:'Liberation Serif',serif;text-shadow:0 0 1px #0a1a50;transform:scaleY(1.12);transform-origin:0 85%;">Khomaucnc.vn</span>
</body></html>
